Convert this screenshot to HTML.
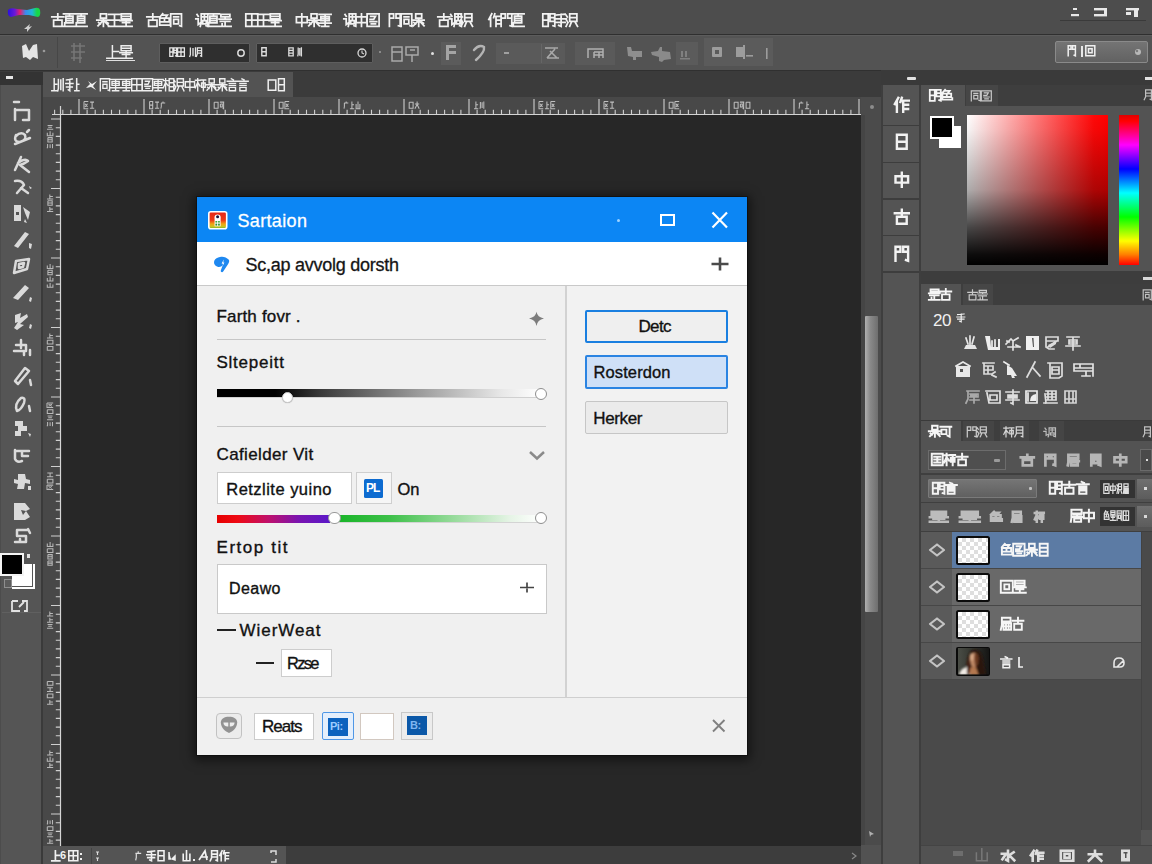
<!DOCTYPE html>
<html><head><meta charset="utf-8"><title>Editor</title>
<style>
html,body{margin:0;padding:0;}
body{width:1152px;height:864px;overflow:hidden;background:#505050;font-family:"Liberation Sans",sans-serif;position:relative;}
div,svg{box-sizing:border-box;}
svg{overflow:visible;}
</style></head><body>
<div style="position:absolute;left:0px;top:0px;width:1152px;height:864px;background:#505050;"></div>
<div style="position:absolute;left:0px;top:0px;width:1152px;height:34px;background:#4d4d4d;"></div>
<div style="position:absolute;left:0px;top:34px;width:1152px;height:1px;background:#2f2f2f;"></div>
<div style="position:absolute;left:0px;top:35px;width:1152px;height:35px;background:#535353;"></div>
<div style="position:absolute;left:0px;top:35px;width:1152px;height:1px;background:#5c5c5c;"></div>
<div style="position:absolute;left:0px;top:70px;width:1152px;height:27px;background:#3b3b3b;"></div>
<div style="position:absolute;left:0px;top:70px;width:1152px;height:1px;background:#303030;"></div>
<svg style="position:absolute;left:5px;top:5px;" width="40" height="30" viewBox="0 0 40 30"><defs><linearGradient id="lg" x1="0" x2="1"><stop offset="0" stop-color="#2a10e0"/><stop offset=".22" stop-color="#6a18d8"/><stop offset=".38" stop-color="#e8206a"/><stop offset=".55" stop-color="#3a8cf0"/><stop offset=".75" stop-color="#20b8d8"/><stop offset=".9" stop-color="#18d848"/><stop offset="1" stop-color="#18d848"/></linearGradient></defs><path d="M3 5 Q2 11 6 12 L14 10 L24 10 L33 12 Q36 11 35 5 Q34 2 30 3 L22 5 L12 4 Q5 2 3 5Z" fill="url(#lg)"/><path d="M19 24 L25 19 L24 22 L27 21 L22 27 L22 24Z" fill="#cfcfcf"/></svg>
<svg style="position:absolute;left:51.2px;top:12.8px" width="37.3" height="14.6" viewBox="0 0 37.3 14.6"><path d="M0.8 4.0L12.8 4.0M6.8 0.8L6.8 7.1M2.6 7.1L11.0 7.1L11.0 13.4L2.6 13.4L2.6 7.1M12.5 0.8L24.4 0.8M14.9 3.1L22.0 3.1L22.0 9.9L14.9 9.9L14.9 3.1M14.9 5.3L22.0 5.3M14.9 7.6L22.0 7.6M18.5 0.8L18.5 3.1M12.5 13.4L24.4 13.4M13.7 9.9L13.7 13.4M24.1 0.8L36.1 0.8M26.5 3.1L33.7 3.1L33.7 9.9L26.5 9.9L26.5 3.1M26.5 5.3L33.7 5.3M26.5 7.6L33.7 7.6M30.1 0.8L30.1 3.1M24.1 13.4L36.1 13.4M25.3 9.9L25.3 13.4" fill="none" stroke="#f2f2f2" stroke-width="1.75" stroke-linecap="square" stroke-linejoin="miter" opacity="1"/></svg>
<svg style="position:absolute;left:96.2px;top:12.8px" width="37.3" height="14.6" viewBox="0 0 37.3 14.6"><path d="M4.4 0.8L10.4 0.8L10.4 5.2L4.4 5.2L4.4 0.8M0.8 7.1L12.8 7.1M7.4 5.2L7.4 13.4M7.4 7.1L2.0 12.8M7.4 7.1L12.8 12.8M2.6 9.6L4.4 10.9M10.4 9.0L12.2 10.2M12.5 1.4L24.4 1.4M13.7 7.1L23.2 7.1M12.5 13.4L24.4 13.4M18.5 1.4L18.5 13.4M25.3 0.8L34.9 0.8L34.9 5.8L25.3 5.8L25.3 0.8M25.3 3.3L34.9 3.3M24.1 7.7L36.1 7.7M26.5 9.6L33.7 9.6M30.1 5.8L30.1 13.4M24.1 13.4L36.1 13.4" fill="none" stroke="#f2f2f2" stroke-width="1.75" stroke-linecap="square" stroke-linejoin="miter" opacity="1"/></svg>
<svg style="position:absolute;left:146.2px;top:12.8px" width="37.3" height="14.6" viewBox="0 0 37.3 14.6"><path d="M0.8 4.0L12.8 4.0M6.8 0.8L6.8 7.1M2.6 7.1L11.0 7.1L11.0 13.4L2.6 13.4L2.6 7.1M16.7 0.8L13.7 4.3M16.1 2.1L21.4 2.1L19.7 4.6M13.7 5.2L23.2 5.2L23.2 9.0L13.7 9.0L13.7 5.2M18.5 5.2L18.5 9.0M13.7 9.0L13.7 12.1L24.4 12.1L24.4 10.2M24.7 0.8L35.5 0.8L35.5 13.4L33.7 12.8M24.7 0.8L24.7 13.4M27.7 4.0L32.5 4.0M27.7 6.5L32.5 6.5L32.5 10.9L27.7 10.9L27.7 6.5" fill="none" stroke="#f2f2f2" stroke-width="1.75" stroke-linecap="square" stroke-linejoin="miter" opacity="1"/></svg>
<svg style="position:absolute;left:195.2px;top:12.8px" width="37.3" height="14.6" viewBox="0 0 37.3 14.6"><path d="M2.0 1.4L3.2 3.3M0.8 5.8L3.2 5.8L3.2 11.5L5.0 10.2M6.2 0.8L12.8 0.8L12.8 13.4L11.0 12.8M6.2 0.8L6.2 9.6L5.3 13.4M7.7 4.0L11.3 4.0M9.4 2.3L9.4 5.8M7.7 7.7L11.3 7.7L11.3 10.9L7.7 10.9L7.7 7.7M12.5 0.8L24.4 0.8M14.9 3.1L22.0 3.1L22.0 9.9L14.9 9.9L14.9 3.1M14.9 5.3L22.0 5.3M14.9 7.6L22.0 7.6M18.5 0.8L18.5 3.1M12.5 13.4L24.4 13.4M13.7 9.9L13.7 13.4M25.9 1.4L34.9 1.4L34.9 4.0L25.9 4.0M25.9 1.4L25.9 4.0M24.1 6.1L36.1 6.1M30.1 4.0L30.1 6.1M25.3 8.4L34.9 8.4M30.1 8.4L30.1 13.4M27.1 10.9L27.1 13.4M24.1 13.4L36.1 13.4" fill="none" stroke="#f2f2f2" stroke-width="1.75" stroke-linecap="square" stroke-linejoin="miter" opacity="1"/></svg>
<svg style="position:absolute;left:245.2px;top:12.8px" width="37.3" height="14.6" viewBox="0 0 37.3 14.6"><path d="M0.8 0.8L12.8 0.8L12.8 13.4L0.8 13.4L0.8 0.8M0.8 7.1L12.8 7.1M6.8 0.8L6.8 13.4M12.5 1.4L24.4 1.4M13.7 7.1L23.2 7.1M12.5 13.4L24.4 13.4M18.5 1.4L18.5 13.4M25.3 0.8L34.9 0.8L34.9 5.8L25.3 5.8L25.3 0.8M25.3 3.3L34.9 3.3M24.1 7.7L36.1 7.7M26.5 9.6L33.7 9.6M30.1 5.8L30.1 13.4M24.1 13.4L36.1 13.4" fill="none" stroke="#f2f2f2" stroke-width="1.75" stroke-linecap="square" stroke-linejoin="miter" opacity="1"/></svg>
<svg style="position:absolute;left:295.2px;top:12.8px" width="37.3" height="14.6" viewBox="0 0 37.3 14.6"><path d="M1.4 4.0L12.2 4.0L12.2 9.6L1.4 9.6L1.4 4.0M6.8 0.8L6.8 13.4M16.1 0.8L22.0 0.8L22.0 5.2L16.1 5.2L16.1 0.8M12.5 7.1L24.4 7.1M19.1 5.2L19.1 13.4M19.1 7.1L13.7 12.8M19.1 7.1L24.4 12.8M14.3 9.6L16.1 10.9M22.0 9.0L23.8 10.2M24.1 1.4L36.1 1.4M25.9 3.6L34.3 3.6L34.3 7.7L25.9 7.7L25.9 3.6M30.1 1.4L30.1 13.4M25.9 5.6L34.3 5.6M24.1 10.2L36.1 10.2M26.5 13.4L33.7 13.4" fill="none" stroke="#f2f2f2" stroke-width="1.75" stroke-linecap="square" stroke-linejoin="miter" opacity="1"/></svg>
<svg style="position:absolute;left:343.2px;top:12.8px" width="37.3" height="14.6" viewBox="0 0 37.3 14.6"><path d="M2.0 1.4L3.2 3.3M0.8 5.8L3.2 5.8L3.2 11.5L5.0 10.2M6.2 0.8L12.8 0.8L12.8 13.4L11.0 12.8M6.2 0.8L6.2 9.6L5.3 13.4M7.7 4.0L11.3 4.0M9.4 2.3L9.4 5.8M7.7 7.7L11.3 7.7L11.3 10.9L7.7 10.9L7.7 7.7M13.1 4.0L23.8 4.0L23.8 9.6L13.1 9.6L13.1 4.0M18.5 0.8L18.5 13.4M24.1 0.8L36.1 0.8L36.1 13.4L24.1 13.4L24.1 0.8M27.7 3.3L32.5 3.3L30.7 6.5L27.1 6.5M27.1 8.6L33.7 8.6M28.3 10.9L32.5 10.9" fill="none" stroke="#f2f2f2" stroke-width="1.75" stroke-linecap="square" stroke-linejoin="miter" opacity="1"/></svg>
<svg style="position:absolute;left:388.2px;top:12.8px" width="37.3" height="14.6" viewBox="0 0 37.3 14.6"><path d="M1.4 0.8L1.4 13.4M1.4 0.8L5.6 0.8L5.6 5.2L1.4 5.2M8.0 0.8L12.2 0.8L12.2 13.4L10.4 12.8M8.0 0.8L8.0 5.2L12.2 5.2M13.1 0.8L23.8 0.8L23.8 13.4L22.0 12.8M13.1 0.8L13.1 13.4M16.1 4.0L20.8 4.0M16.1 6.5L20.8 6.5L20.8 10.9L16.1 10.9L16.1 6.5M27.7 0.8L33.7 0.8L33.7 5.2L27.7 5.2L27.7 0.8M24.1 7.1L36.1 7.1M30.7 5.2L30.7 13.4M30.7 7.1L25.3 12.8M30.7 7.1L36.1 12.8M25.9 9.6L27.7 10.9M33.7 9.0L35.5 10.2" fill="none" stroke="#f2f2f2" stroke-width="1.75" stroke-linecap="square" stroke-linejoin="miter" opacity="1"/></svg>
<svg style="position:absolute;left:437.2px;top:12.8px" width="37.3" height="14.6" viewBox="0 0 37.3 14.6"><path d="M0.8 4.0L12.8 4.0M6.8 0.8L6.8 7.1M2.6 7.1L11.0 7.1L11.0 13.4L2.6 13.4L2.6 7.1M13.7 1.4L14.9 3.3M12.5 5.8L14.9 5.8L14.9 11.5L16.7 10.2M17.9 0.8L24.4 0.8L24.4 13.4L22.6 12.8M17.9 0.8L17.9 9.6L17.0 13.4M19.4 4.0L23.0 4.0M21.1 2.3L21.1 5.8M19.4 7.7L23.0 7.7L23.0 10.9L19.4 10.9L19.4 7.7M24.1 2.1L25.3 4.0M24.1 6.5L25.3 8.4M24.1 13.4L25.9 9.6M27.7 0.8L34.9 0.8L34.9 8.4L27.7 8.4L27.7 0.8M27.7 4.6L34.9 4.6M29.5 9.0L27.7 13.4M33.1 9.0L35.5 13.4" fill="none" stroke="#f2f2f2" stroke-width="1.75" stroke-linecap="square" stroke-linejoin="miter" opacity="1"/></svg>
<svg style="position:absolute;left:488.2px;top:12.8px" width="37.3" height="14.6" viewBox="0 0 37.3 14.6"><path d="M3.8 0.8L0.8 6.5M2.6 4.6L2.6 13.4M6.8 0.8L5.6 4.6M6.2 3.3L12.8 3.3M8.0 3.3L8.0 13.4M8.0 7.1L12.2 7.1M8.0 10.9L12.2 10.9M13.1 0.8L13.1 13.4M13.1 0.8L17.3 0.8L17.3 5.2L13.1 5.2M19.7 0.8L23.8 0.8L23.8 13.4L22.0 12.8M19.7 0.8L19.7 5.2L23.8 5.2M24.1 0.8L36.1 0.8M26.5 3.1L33.7 3.1L33.7 9.9L26.5 9.9L26.5 3.1M26.5 5.3L33.7 5.3M26.5 7.6L33.7 7.6M30.1 0.8L30.1 3.1M24.1 13.4L36.1 13.4M25.3 9.9L25.3 13.4" fill="none" stroke="#f2f2f2" stroke-width="1.75" stroke-linecap="square" stroke-linejoin="miter" opacity="1"/></svg>
<svg style="position:absolute;left:542.2px;top:12.8px" width="37.3" height="14.6" viewBox="0 0 37.3 14.6"><path d="M0.8 0.8L6.2 0.8L6.2 13.4L0.8 13.4L0.8 0.8M0.8 7.1L6.2 7.1M8.0 0.8L12.8 0.8L12.8 13.4L11.0 12.8M8.0 0.8L8.0 8.4M8.0 4.6L12.8 4.6M8.0 8.4L12.8 8.4M13.7 2.1L23.2 1.1M12.5 5.8L24.4 5.8M13.7 9.4L23.2 9.4M19.1 1.4L19.1 13.4L16.7 12.4M24.1 2.1L25.3 4.0M24.1 6.5L25.3 8.4M24.1 13.4L25.9 9.6M27.7 0.8L34.9 0.8L34.9 8.4L27.7 8.4L27.7 0.8M27.7 4.6L34.9 4.6M29.5 9.0L27.7 13.4M33.1 9.0L35.5 13.4" fill="none" stroke="#f2f2f2" stroke-width="1.75" stroke-linecap="square" stroke-linejoin="miter" opacity="1"/></svg>
<div style="position:absolute;left:1060px;top:20px;width:86px;height:1px;background:#3a3a3a;"></div>
<svg style="position:absolute;left:1068px;top:6px;" width="76" height="13" viewBox="0 0 76 13"><g fill="#e8e8e8"><rect x="3" y="8" width="8" height="2.2"/><rect x="5" y="2" width="4" height="2"/><rect x="26" y="2" width="13" height="2.4"/><rect x="26" y="8" width="13" height="2.4"/><rect x="36" y="2" width="3" height="8"/><rect x="58" y="2" width="13" height="2.4"/><rect x="66" y="2" width="4" height="9"/><rect x="58" y="6" width="5" height="3"/></g></svg>
<svg style="position:absolute;left:20px;top:42px;" width="34" height="22" viewBox="0 0 34 22"><path d="M2 4 L6 2 L9 9 L13 3 L17 2 L18 17 L13 15 L10 18 L6 15 L3 16Z" fill="#e4e4e4"/><circle cx="24" cy="9" r="1.3" fill="#9a9a9a"/></svg>
<div style="position:absolute;left:57px;top:37px;width:1px;height:31px;background:#474747;"></div>
<svg style="position:absolute;left:68px;top:42px;" width="20" height="22" viewBox="0 0 20 22"><g stroke="#767676" stroke-width="1.6" fill="none"><path d="M3 4H17M3 10H17M3 16H14M6 1V19M12 1V21"/></g></svg>
<svg style="position:absolute;left:106.2px;top:45.2px" width="27.5" height="14.5" viewBox="0 0 27.5 14.5"><path d="M6.4 0.8L6.4 13.3M6.4 6.4L12.7 6.4M0.8 13.3L13.3 13.3M15.1 0.8L25.1 0.8L25.1 5.8L15.1 5.8L15.1 0.8M15.1 3.3L25.1 3.3M13.8 7.7L26.3 7.7M16.3 9.6L23.8 9.6M20.1 5.8L20.1 13.3M13.8 13.3L26.3 13.3" fill="none" stroke="#ededed" stroke-width="1.50" stroke-linecap="square" stroke-linejoin="miter" opacity="1"/></svg>
<div style="position:absolute;left:106px;top:60px;width:29px;height:1.3px;background:#e0e0e0;"></div>
<div style="position:absolute;left:159px;top:43px;width:91px;height:20px;background:#2f2f2f;border:1px solid #5e5e5e;border-radius:1px"></div>
<div style="position:absolute;left:256px;top:43px;width:117px;height:20px;background:#2f2f2f;border:1px solid #5e5e5e;border-radius:1px"></div>
<svg style="position:absolute;left:169.2px;top:47.2px" width="16.6" height="10.5" viewBox="0 0 16.6 10.5"><path d="M0.8 0.8L3.9 0.8L3.9 9.3L0.8 9.3L0.8 0.8M0.8 5.0L3.9 5.0M4.9 0.8L7.6 0.8L7.6 9.3L6.6 8.9M4.9 0.8L4.9 5.9M4.9 3.3L7.6 3.3M4.9 5.9L7.6 5.9M8.6 0.8L15.4 0.8L15.4 9.3L8.6 9.3L8.6 0.8M8.6 5.0L15.4 5.0M12.0 0.8L12.0 9.3" fill="none" stroke="#e6e6e6" stroke-width="1.30" stroke-linecap="square" stroke-linejoin="miter" opacity="1"/></svg>
<svg style="position:absolute;left:189.2px;top:47.2px" width="14.8" height="10.5" viewBox="0 0 14.8 10.5"><path d="M1.4 1.2L1.4 7.6L0.8 9.3M4.0 1.7L4.0 8.5M6.5 0.8L6.5 9.3M8.4 0.8L12.6 0.8L12.6 9.3L11.6 8.9M8.4 0.8L8.4 6.7L7.5 9.3M8.4 3.6L12.6 3.6M8.4 6.1L12.6 6.1" fill="none" stroke="#e6e6e6" stroke-width="1.30" stroke-linecap="square" stroke-linejoin="miter" opacity="1"/></svg>
<svg style="position:absolute;left:235px;top:47px;" width="12" height="12" viewBox="0 0 12 12"><circle cx="6" cy="6" r="3.2" fill="none" stroke="#d8d8d8" stroke-width="1.5"/></svg>
<svg style="position:absolute;left:260.2px;top:47.2px" width="8.4" height="10.0" viewBox="0 0 8.4 10.0"><path d="M1.8 0.8L6.2 0.8L6.2 8.8L1.8 8.8L1.8 0.8M1.8 4.8L6.2 4.8" fill="none" stroke="#dcdcdc" stroke-width="1.40" stroke-linecap="square" stroke-linejoin="miter" opacity="1"/></svg>
<svg style="position:absolute;left:287.2px;top:47.2px" width="8.4" height="10.0" viewBox="0 0 8.4 10.0"><path d="M1.8 0.8L6.2 0.8L6.2 8.8L1.8 8.8L1.8 0.8M1.8 3.4L6.2 3.4M1.8 6.1L6.2 6.1" fill="none" stroke="#dcdcdc" stroke-width="1.30" stroke-linecap="square" stroke-linejoin="miter" opacity="1"/></svg>
<svg style="position:absolute;left:297.2px;top:47.2px" width="6.0" height="10.0" viewBox="0 0 6.0 10.0"><path d="M1.2 1.2L1.2 7.2L0.8 8.8M2.8 1.6L2.8 8.0M4.4 0.8L4.4 8.8" fill="none" stroke="#dcdcdc" stroke-width="1.30" stroke-linecap="square" stroke-linejoin="miter" opacity="1"/></svg>
<svg style="position:absolute;left:355px;top:46px;" width="14" height="14" viewBox="0 0 14 14"><circle cx="7" cy="7" r="4" fill="none" stroke="#d8d8d8" stroke-width="1.3"/><path d="M7 4.5V7L9 8" stroke="#d8d8d8" stroke-width="1.1" fill="none"/></svg>
<div style="position:absolute;left:379px;top:51px;width:2px;height:2px;background:#8a8a8a;"></div>
<svg style="position:absolute;left:390px;top:44px;" width="32" height="20" viewBox="0 0 32 20"><g stroke="#a9a9a9" stroke-width="1.5" fill="none"><path d="M2 3H12V17H2ZM2 8H12"/><path d="M16 3H28V11H16ZM20 6H25M22 11V18"/></g></svg>
<div style="position:absolute;left:431px;top:52px;width:2.5px;height:2.5px;background:#e0e0e0;border-radius:2px"></div>
<div style="position:absolute;left:441px;top:42px;width:20px;height:23px;background:#5b5b5b;"></div>
<svg style="position:absolute;left:444px;top:44px;" width="14" height="18" viewBox="0 0 14 18"><g fill="#a4a4a4"><rect x="2" y="1" width="3" height="15"/><rect x="2" y="1" width="10" height="3"/><rect x="5" y="7" width="7" height="3"/></g></svg>
<svg style="position:absolute;left:470px;top:43px;" width="18" height="20" viewBox="0 0 18 20"><path d="M4 7 Q9 1 14 4 Q15 9 6 17" fill="none" stroke="#b4b4b4" stroke-width="2.4" stroke-linecap="round"/></svg>
<div style="position:absolute;left:496px;top:43px;width:69px;height:21px;background:#5a5a5a;"></div>
<div style="position:absolute;left:504px;top:52px;width:5px;height:1.6px;background:#a0a0a0;"></div>
<div style="position:absolute;left:541px;top:44px;width:1px;height:19px;background:#666;"></div>
<svg style="position:absolute;left:543px;top:45px;" width="18" height="16" viewBox="0 0 18 16"><g stroke="#a8a8a8" stroke-width="1.6" fill="none"><path d="M2 3H15M4 13H16M12 4L4 13M7 6L14 13"/></g></svg>
<div style="position:absolute;left:575px;top:42px;width:40px;height:23px;background:#5a5a5a;"></div>
<svg style="position:absolute;left:586px;top:47px;" width="20" height="13" viewBox="0 0 20 13"><g stroke="#b0b0b0" stroke-width="1.5" fill="none"><path d="M2 11V2H17V11M8 5H17M8 5V11M8 8H17M13 5V11"/></g></svg>
<svg style="position:absolute;left:624px;top:44px;" width="22" height="20" viewBox="0 0 22 20"><path d="M3 3 L7 3 L8 7 L18 7 L18 13 L12 13 L12 16 L9 16 L9 13 L4 12Z" fill="#8e8e8e"/></svg>
<svg style="position:absolute;left:650px;top:44px;" width="26" height="20" viewBox="0 0 26 20"><path d="M1 8 L8 7 L10 3 L12 3 L12 7 L20 8 L21 15 L14 16 L12 18 L9 17 L9 13 L2 11Z" fill="#8a8a8a"/></svg>
<div style="position:absolute;left:676px;top:42px;width:22px;height:23px;background:#5b5b5b;"></div>
<svg style="position:absolute;left:678px;top:50px;" width="16" height="12" viewBox="0 0 16 12"><g fill="#808080"><rect x="3" y="1" width="2" height="6"/><rect x="7" y="1" width="2" height="6"/><rect x="2" y="8" width="10" height="1.5"/></g></svg>
<div style="position:absolute;left:704px;top:38px;width:69px;height:28px;background:#5b5b5b;"></div>
<svg style="position:absolute;left:708px;top:44px;" width="60" height="18" viewBox="0 0 60 18"><g fill="#9c9c9c"><rect x="4" y="3" width="10" height="10" rx="1"/><rect x="28" y="3" width="7" height="10"/><rect x="35" y="1" width="2" height="14"/><rect x="38" y="11" width="7" height="1.6"/><rect x="58" y="4" width="1.6" height="11"/></g><rect x="7" y="6" width="4" height="4" fill="#5b5b5b"/></svg>
<div style="position:absolute;left:1055px;top:41px;width:93px;height:22px;background:linear-gradient(#747474,#626262);border:1px solid #8a8a8a;border-radius:2px"></div>
<svg style="position:absolute;left:1067.2px;top:45.2px" width="10.0" height="12.0" viewBox="0 0 10.0 12.0"><path d="M1.2 0.8L1.2 10.8M1.2 0.8L4.0 0.8L4.0 4.3L1.2 4.3M5.6 0.8L8.4 0.8L8.4 10.8L7.2 10.3M5.6 0.8L5.6 4.3L8.4 4.3" fill="none" stroke="#f0f0f0" stroke-width="1.50" stroke-linecap="square" stroke-linejoin="miter" opacity="1"/></svg>
<div style="position:absolute;left:1081px;top:46px;width:1.5px;height:11px;background:#e8e8e8;"></div>
<svg style="position:absolute;left:1085.2px;top:45.2px" width="11.0" height="12.0" viewBox="0 0 11.0 12.0"><path d="M0.8 0.8L9.8 0.8L9.8 10.8L0.8 10.8L0.8 0.8M3.5 3.8L7.1 3.8L7.1 7.8L3.5 7.8L3.5 3.8" fill="none" stroke="#f0f0f0" stroke-width="1.50" stroke-linecap="square" stroke-linejoin="miter" opacity="1"/></svg>
<svg style="position:absolute;left:1133px;top:47px;" width="10" height="10" viewBox="0 0 10 10"><circle cx="5" cy="5" r="3" fill="#b8b8b8"/><circle cx="4" cy="4" r="1.2" fill="#7a7a7a"/></svg>
<div style="position:absolute;left:43px;top:72px;width:250px;height:25px;background:#535353;"></div>
<div style="position:absolute;left:0px;top:72px;width:43px;height:13px;background:#333;"></div>
<div style="position:absolute;left:6px;top:76px;width:7px;height:3px;background:#e6e6e6;"></div>
<svg style="position:absolute;left:51.2px;top:78.2px" width="7.4" height="14.0" viewBox="0 0 7.4 14.0"><path d="M3.2 0.8L3.2 12.8M3.2 6.2L5.9 6.2M0.8 12.8L6.2 12.8" fill="none" stroke="#efefef" stroke-width="1.50" stroke-linecap="square" stroke-linejoin="miter" opacity="1"/></svg>
<svg style="position:absolute;left:57.2px;top:78.2px" width="8.0" height="14.0" viewBox="0 0 8.0 14.0"><path d="M1.4 1.4L1.4 10.4L0.8 12.8M3.8 2.0L3.8 11.6M6.2 0.8L6.2 12.8" fill="none" stroke="#efefef" stroke-width="1.50" stroke-linecap="square" stroke-linejoin="miter" opacity="1"/></svg>
<svg style="position:absolute;left:65.2px;top:78.2px" width="9.2" height="14.0" viewBox="0 0 9.2 14.0"><path d="M1.5 2.0L7.3 1.0M0.8 5.6L8.0 5.6M1.5 9.0L7.3 9.0M4.8 1.4L4.8 12.8L3.3 11.8" fill="none" stroke="#efefef" stroke-width="1.50" stroke-linecap="square" stroke-linejoin="miter" opacity="1"/></svg>
<svg style="position:absolute;left:74.2px;top:78.2px" width="6.2" height="14.0" viewBox="0 0 6.2 14.0"><path d="M2.7 0.8L2.7 12.8M2.7 6.2L4.8 6.2M0.8 12.8L5.0 12.8" fill="none" stroke="#efefef" stroke-width="1.50" stroke-linecap="square" stroke-linejoin="miter" opacity="1"/></svg>
<svg style="position:absolute;left:84px;top:78px;" width="14" height="14" viewBox="0 0 14 14"><path d="M2 10 L6 6 L4 3 L8 6 L13 3 L9 8 L12 12 L7 9Z" fill="#efefef"/></svg>
<svg style="position:absolute;left:99.2px;top:78.2px" width="150.4" height="14.0" viewBox="0 0 150.4 14.0"><path d="M1.3 0.8L10.6 0.8L10.6 12.8L9.1 12.2M1.3 0.8L1.3 12.8M3.9 3.8L8.0 3.8M3.9 6.2L8.0 6.2L8.0 10.4L3.9 10.4L3.9 6.2M11.4 1.4L21.7 1.4M13.0 3.4L20.2 3.4L20.2 7.4L13.0 7.4L13.0 3.4M16.6 1.4L16.6 12.8M13.0 5.4L20.2 5.4M11.4 9.8L21.7 9.8M13.5 12.8L19.7 12.8M22.0 1.4L32.4 1.4M23.6 3.4L30.8 3.4L30.8 7.4L23.6 7.4L23.6 3.4M27.2 1.4L27.2 12.8M23.6 5.4L30.8 5.4M22.0 9.8L32.4 9.8M24.1 12.8L30.3 12.8M32.7 0.8L43.0 0.8L43.0 12.8L32.7 12.8L32.7 0.8M32.7 6.8L43.0 6.8M37.8 0.8L37.8 12.8M43.3 0.8L53.6 0.8L53.6 12.8L43.3 12.8L43.3 0.8M46.4 3.2L50.5 3.2L49.0 6.2L45.9 6.2M45.9 8.2L51.5 8.2M46.9 10.4L50.5 10.4M53.9 1.4L64.2 1.4M55.4 3.4L62.7 3.4L62.7 7.4L55.4 7.4L55.4 3.4M59.1 1.4L59.1 12.8M55.4 5.4L62.7 5.4M53.9 9.8L64.2 9.8M56.0 12.8L62.2 12.8M64.5 2.6L68.9 2.6M66.6 0.8L66.6 12.8M66.6 4.4L64.5 9.2M66.6 4.4L68.9 7.4M70.2 0.8L74.8 0.8L74.8 12.8L70.2 12.8L70.2 0.8M70.2 4.8L74.8 4.8M70.2 8.7L74.8 8.7M75.1 2.0L76.2 3.8M75.1 6.2L76.2 8.0M75.1 12.8L76.7 9.2M78.2 0.8L84.4 0.8L84.4 8.0L78.2 8.0L78.2 0.8M78.2 4.4L84.4 4.4M79.8 8.6L78.2 12.8M82.9 8.6L84.9 12.8M86.3 3.8L95.6 3.8L95.6 9.2L86.3 9.2L86.3 3.8M90.9 0.8L90.9 12.8M96.4 2.2L101.0 2.2M98.7 0.8L98.7 12.8M98.7 4.4L96.4 9.8M98.7 4.4L101.0 8.0M102.1 2.0L106.7 2.0M102.6 5.0L106.2 5.0L106.2 9.2L102.6 9.2L102.6 5.0M104.4 2.0L104.4 12.8M110.1 0.8L115.3 0.8L115.3 5.0L110.1 5.0L110.1 0.8M107.0 6.8L117.3 6.8M112.7 5.0L112.7 12.8M112.7 6.8L108.0 12.2M112.7 6.8L117.3 12.2M108.5 9.2L110.1 10.4M115.3 8.6L116.8 9.8M120.7 0.8L125.9 0.8L125.9 5.0L120.7 5.0L120.7 0.8M117.6 6.8L127.9 6.8M123.3 5.0L123.3 12.8M123.3 6.8L118.7 12.2M123.3 6.8L127.9 12.2M119.2 9.2L120.7 10.4M125.9 8.6L127.4 9.8M132.4 0.8L134.4 1.8M128.2 3.2L138.6 3.2M130.3 5.4L136.5 5.4M130.3 7.4L136.5 7.4M130.3 9.4L136.5 9.4L136.5 12.8L130.3 12.8L130.3 9.4M143.0 0.8L145.1 1.8M138.9 3.2L149.2 3.2M140.9 5.4L147.1 5.4M140.9 7.4L147.1 7.4M140.9 9.4L147.1 9.4L147.1 12.8L140.9 12.8L140.9 9.4" fill="none" stroke="#efefef" stroke-width="1.40" stroke-linecap="square" stroke-linejoin="miter" opacity="1"/></svg>
<svg style="position:absolute;left:267.2px;top:78.2px" width="19.8" height="14.0" viewBox="0 0 19.8 14.0"><path d="M1.2 2.0L8.8 2.0L8.8 12.2L1.2 12.2L1.2 2.0M11.5 0.8L17.3 0.8L17.3 12.8L11.5 12.8L11.5 0.8M11.5 6.8L17.3 6.8" fill="none" stroke="#efefef" stroke-width="1.50" stroke-linecap="square" stroke-linejoin="miter" opacity="1"/></svg>
<div style="position:absolute;left:0px;top:85px;width:41px;height:779px;background:#555555;"></div>
<div style="position:absolute;left:0px;top:85px;width:1px;height:779px;background:#4c4c4c;"></div>
<div style="position:absolute;left:41px;top:85px;width:2px;height:779px;background:#3a3a3a;"></div>
<div style="position:absolute;left:2px;top:612px;width:39px;height:1px;background:#606060;"></div>
<svg style="position:absolute;left:12px;top:100px;" width="22" height="22" viewBox="0 0 22 22"><path d="M2 2H7M3 9V20M3 10H17V20H11" fill="none" stroke="#dadada" stroke-width="2.5" stroke-linejoin="round" stroke-linecap="round"/></svg>
<svg style="position:absolute;left:12px;top:129px;" width="22" height="22" viewBox="0 0 22 22"><path d="M4 6Q1 13 8 13Q15 11 13 6Q9 2 4 7M3 15L18 9M15 3L17 1" fill="none" stroke="#dadada" stroke-width="2.5" stroke-linejoin="round" stroke-linecap="round"/></svg>
<svg style="position:absolute;left:12px;top:155px;" width="22" height="22" viewBox="0 0 22 22"><path d="M3 15L9 2M6 8Q13 3 16 6Q12 9 8 10L17 17" fill="none" stroke="#dadada" stroke-width="2.5" stroke-linejoin="round" stroke-linecap="round"/></svg>
<svg style="position:absolute;left:12px;top:178px;" width="22" height="22" viewBox="0 0 22 22"><path d="M17 8L20 10L18 11Z" fill="#dadada" fill-rule="evenodd"/><path d="M3 3Q10 2 12 7L5 15M9 10L16 15" fill="none" stroke="#dadada" stroke-width="2.5" stroke-linejoin="round" stroke-linecap="round"/></svg>
<svg style="position:absolute;left:12px;top:204px;" width="22" height="22" viewBox="0 0 22 22"><path d="M2 1H9V17H2ZM4 8H7V11H4ZM11 3L18 8L16 16L13 9ZM13 15L15 19L12 18Z" fill="#dadada" fill-rule="evenodd"/></svg>
<svg style="position:absolute;left:12px;top:231px;" width="22" height="22" viewBox="0 0 22 22"><path d="M13 1L17 3L6 17L2 15ZM17 12L20 13L19 18L17 17Z" fill="#dadada" fill-rule="evenodd"/></svg>
<svg style="position:absolute;left:12px;top:258px;" width="22" height="22" viewBox="0 0 22 22"><path d="M4 3L17 1L15 11L2 15ZM7 6L12 5L11 9L7 10Z" fill="none" stroke="#dadada" stroke-width="2.5" stroke-linejoin="round" stroke-linecap="round"/></svg>
<svg style="position:absolute;left:12px;top:284px;" width="22" height="22" viewBox="0 0 22 22"><path d="M13 1L17 4L6 16L1 14ZM18 13L20 14L19 18L17 17Z" fill="#dadada" fill-rule="evenodd"/></svg>
<svg style="position:absolute;left:12px;top:312px;" width="22" height="22" viewBox="0 0 22 22"><path d="M3 3L9 1L8 6L15 2L16 5L8 12L12 13L5 18L2 16L6 10L3 11ZM18 12L20 13L19 17L17 16Z" fill="#dadada" fill-rule="evenodd"/></svg>
<svg style="position:absolute;left:12px;top:338px;" width="22" height="22" viewBox="0 0 22 22"><path d="M9 2V10M4 7H14V13M2 13H12V17M18 12V17" fill="none" stroke="#dadada" stroke-width="2.5" stroke-linejoin="round" stroke-linecap="round"/></svg>
<svg style="position:absolute;left:12px;top:366px;" width="22" height="22" viewBox="0 0 22 22"><path d="M13 2L17 5L6 18L3 15ZM18 14L19 19" fill="none" stroke="#dadada" stroke-width="2.5" stroke-linejoin="round" stroke-linecap="round"/></svg>
<svg style="position:absolute;left:12px;top:395px;" width="22" height="22" viewBox="0 0 22 22"><path d="M5 16Q2 9 9 3Q14 2 12 8Q9 15 5 16M17 11L18 16" fill="none" stroke="#dadada" stroke-width="2.5" stroke-linejoin="round" stroke-linecap="round"/></svg>
<svg style="position:absolute;left:12px;top:420px;" width="22" height="22" viewBox="0 0 22 22"><path d="M3 1H11V6H15V11H9V16H3V11H6V6H3ZM16 13L19 14L18 17Z" fill="#dadada" fill-rule="evenodd"/></svg>
<svg style="position:absolute;left:12px;top:447px;" width="22" height="22" viewBox="0 0 22 22"><path d="M3 3V12Q5 16 10 14M3 4H17M10 4V9H16" fill="none" stroke="#dadada" stroke-width="2.5" stroke-linejoin="round" stroke-linecap="round"/></svg>
<svg style="position:absolute;left:12px;top:473px;" width="22" height="22" viewBox="0 0 22 22"><path d="M6 1H13L14 6L18 7V11L13 10L12 16H5L6 11L2 10V6L6 7ZM16 13H19V17H16Z" fill="#dadada" fill-rule="evenodd"/></svg>
<svg style="position:absolute;left:12px;top:502px;" width="22" height="22" viewBox="0 0 22 22"><path d="M2 1H13L18 7L14 9L18 15L13 18H2ZM9 8L14 9L11 13Z" fill="#dadada" fill-rule="evenodd"/></svg>
<svg style="position:absolute;left:12px;top:528px;" width="22" height="22" viewBox="0 0 22 22"><path d="M5 2H15M5 2V8H14V14H3M16 1L18 5M8 14V11" fill="none" stroke="#dadada" stroke-width="2.5" stroke-linejoin="round" stroke-linecap="round"/></svg>
<div style="position:absolute;left:12px;top:564px;width:23px;height:25px;background:#ffffff;box-shadow:inset -2px -2px 0 0 #fff,inset -3px -3px 0 0 #555"></div>
<div style="position:absolute;left:0px;top:553px;width:24px;height:23px;background:#000;border:2.5px solid #f4f4f4"></div>
<div style="position:absolute;left:26.5px;top:554px;width:3.5px;height:3.5px;background:#e0e0e0;"></div>
<div style="position:absolute;left:4px;top:579px;width:8px;height:9px;background:#5c5c5c;border:1px solid #8e8e8e"></div>
<svg style="position:absolute;left:10px;top:599px;" width="20" height="14" viewBox="0 0 20 14"><g stroke="#e2e2e2" stroke-width="1.8" fill="none"><path d="M2 2H8M2 2V12H10M12 2H17V12H14M9 8L14 3"/></g></svg>
<div style="position:absolute;left:43px;top:97px;width:838px;height:18px;background:#484848;"></div>
<div style="position:absolute;left:43px;top:97px;width:18px;height:749px;background:#484848;"></div>
<div style="position:absolute;left:61px;top:115px;width:800px;height:731px;background:#272727;"></div>
<svg style="position:absolute;left:0;top:0" width="1152" height="864" viewBox="0 0 1152 864"><path d="M54.6 109.8V115M62.8 109.8V115M70.9 109.8V115M79.0 99V115M87.1 109.8V115M95.2 109.8V115M103.4 109.8V115M111.5 109.8V115M119.6 109.8V115M127.8 109.8V115M135.9 109.8V115M144.0 99V115M152.1 109.8V115M160.2 109.8V115M168.4 109.8V115M176.5 109.8V115M184.6 109.8V115M192.8 109.8V115M200.9 109.8V115M209.0 99V115M217.1 109.8V115M225.2 109.8V115M233.4 109.8V115M241.5 109.8V115M249.6 109.8V115M257.8 109.8V115M265.9 109.8V115M274.0 99V115M282.1 109.8V115M290.2 109.8V115M298.4 109.8V115M306.5 109.8V115M314.6 109.8V115M322.8 109.8V115M330.9 109.8V115M339.0 99V115M347.1 109.8V115M355.2 109.8V115M363.4 109.8V115M371.5 109.8V115M379.6 109.8V115M387.8 109.8V115M395.9 109.8V115M404.0 99V115M412.1 109.8V115M420.2 109.8V115M428.4 109.8V115M436.5 109.8V115M444.6 109.8V115M452.8 109.8V115M460.9 109.8V115M469.0 99V115M477.1 109.8V115M485.2 109.8V115M493.4 109.8V115M501.5 109.8V115M509.6 109.8V115M517.8 109.8V115M525.9 109.8V115M534.0 99V115M542.1 109.8V115M550.2 109.8V115M558.4 109.8V115M566.5 109.8V115M574.6 109.8V115M582.8 109.8V115M590.9 109.8V115M599.0 99V115M607.1 109.8V115M615.2 109.8V115M623.4 109.8V115M631.5 109.8V115M639.6 109.8V115M647.8 109.8V115M655.9 109.8V115M664.0 99V115M672.1 109.8V115M680.2 109.8V115M688.4 109.8V115M696.5 109.8V115M704.6 109.8V115M712.8 109.8V115M720.9 109.8V115M729.0 99V115M737.1 109.8V115M745.2 109.8V115M753.4 109.8V115M761.5 109.8V115M769.6 109.8V115M777.8 109.8V115M785.9 109.8V115M794.0 99V115M802.1 109.8V115M810.2 109.8V115M818.4 109.8V115M826.5 109.8V115M834.6 109.8V115M842.8 109.8V115M850.9 109.8V115M859.0 99V115" stroke="#cfcfcf" stroke-width="1.1" fill="none"/>
<path d="M52 114.5H861" stroke="#d4d4d4" stroke-width="1.2"/>
<path d="M51 119.0H61M55.8 127.7H61M55.8 136.4H61M55.8 145.1H61M55.8 153.8H61M55.8 162.4H61M55.8 171.1H61M55.8 179.8H61M51 188.5H61M55.8 197.2H61M55.8 205.9H61M55.8 214.6H61M55.8 223.2H61M55.8 231.9H61M55.8 240.6H61M55.8 249.3H61M51 258.0H61M55.8 266.7H61M55.8 275.4H61M55.8 284.1H61M55.8 292.8H61M55.8 301.4H61M55.8 310.1H61M55.8 318.8H61M51 327.5H61M55.8 336.2H61M55.8 344.9H61M55.8 353.6H61M55.8 362.2H61M55.8 370.9H61M55.8 379.6H61M55.8 388.3H61M51 397.0H61M55.8 405.7H61M55.8 414.4H61M55.8 423.1H61M55.8 431.8H61M55.8 440.4H61M55.8 449.1H61M55.8 457.8H61M51 466.5H61M55.8 475.2H61M55.8 483.9H61M55.8 492.6H61M55.8 501.2H61M55.8 509.9H61M55.8 518.6H61M55.8 527.3H61M51 536.0H61M55.8 544.7H61M55.8 553.4H61M55.8 562.1H61M55.8 570.8H61M55.8 579.4H61M55.8 588.1H61M55.8 596.8H61M51 605.5H61M55.8 614.2H61M55.8 622.9H61M55.8 631.6H61M55.8 640.2H61M55.8 648.9H61M55.8 657.6H61M55.8 666.3H61M51 675.0H61M55.8 683.7H61M55.8 692.4H61M55.8 701.1H61M55.8 709.8H61M55.8 718.4H61M55.8 727.1H61M55.8 735.8H61M51 744.5H61M55.8 753.2H61M55.8 761.9H61M55.8 770.6H61M55.8 779.2H61M55.8 787.9H61M55.8 796.6H61M55.8 805.3H61M51 814.0H61M55.8 822.7H61M55.8 831.4H61M55.8 840.1H61" stroke="#cfcfcf" stroke-width="1.1" fill="none"/>
<path d="M60.5 106V846" stroke="#d4d4d4" stroke-width="1.2"/>
<path d="M84.0 101.5L88.3 101.5M84.0 101.5L84.0 108.7L88.3 108.7M85.1 103.7L87.5 106.9M87.5 103.7L85.1 106.9M90.1 102.1L94.0 102.1M92.1 102.1L92.1 108.3M89.9 108.3L94.2 108.3M149.6 101.5L152.7 101.5L152.7 108.7L149.6 108.7L149.6 101.5M149.6 105.1L152.7 105.1M155.1 102.1L159.0 102.1M157.1 102.1L157.1 108.3M154.9 108.3L159.2 108.3M163.0 101.5L163.0 102.6M161.1 102.9L165.2 102.9M161.3 102.9L161.3 106.5L160.8 108.7M214.2 102.2L218.1 102.2L218.1 108.3L214.2 108.3L214.2 102.2M219.9 102.1L224.2 102.1M223.6 102.1L223.6 108.7L222.7 108.0M220.4 104.0L222.3 104.0L222.3 106.9L220.4 106.9L220.4 104.0M279.2 102.2L283.1 102.2L283.1 108.3L279.2 108.3L279.2 102.2M284.9 101.5L289.2 101.5M284.9 101.5L284.9 108.7L289.2 108.7M286.0 103.7L288.4 106.9M288.4 103.7L286.0 106.9M346.2 101.5L346.2 102.6M344.2 102.9L348.3 102.9M344.4 102.9L344.4 106.5L344.0 108.7M351.9 101.5L351.9 108.7M351.9 104.7L354.0 104.7M349.9 108.7L354.2 108.7M356.1 104.0L356.1 108.7L359.9 108.7L359.9 104.0M358.0 101.5L358.0 108.7M409.2 102.2L413.1 102.2L413.1 108.3L409.2 108.3L409.2 102.2M414.9 104.0L419.2 104.0M417.1 101.5L417.1 104.4L414.9 108.7M417.1 104.4L419.2 108.7M475.9 101.5L475.9 108.7M475.9 104.7L478.1 104.7M474.0 108.7L478.3 108.7M480.4 101.9L480.4 107.3L479.9 108.7M482.1 102.2L482.1 108.0M483.8 101.5L483.8 108.7M539.0 101.5L543.3 101.5M539.0 101.5L539.0 108.7L543.3 108.7M540.1 103.7L542.5 106.9M542.5 103.7L540.1 106.9M546.9 101.5L546.9 108.7M546.9 104.7L549.0 104.7M544.9 108.7L549.2 108.7M550.8 101.5L555.2 101.5M550.8 101.5L550.8 108.7L555.2 108.7M551.9 103.7L554.3 106.9M554.3 103.7L551.9 106.9M604.0 101.5L608.3 101.5M604.0 101.5L604.0 108.7L608.3 108.7M605.1 103.7L607.5 106.9M607.5 103.7L605.1 106.9M610.1 102.1L614.0 102.1M612.1 102.1L612.1 108.3M609.9 108.3L614.2 108.3M669.2 102.2L673.1 102.2L673.1 108.3L669.2 108.3L669.2 102.2M674.9 101.5L679.2 101.5M674.9 101.5L674.9 108.7L679.2 108.7M676.0 103.7L678.4 106.9M678.4 103.7L676.0 106.9M734.2 102.2L738.1 102.2L738.1 108.3L734.2 108.3L734.2 102.2M739.9 102.1L744.2 102.1M743.6 102.1L743.6 108.7L742.7 108.0M740.4 104.0L742.3 104.0L742.3 106.9L740.4 106.9L740.4 104.0M746.1 102.2L749.9 102.2L749.9 108.3L746.1 108.3L746.1 102.2M801.2 101.5L801.2 102.6M799.2 102.9L803.3 102.9M799.4 102.9L799.4 106.5L799.0 108.7M806.9 101.5L806.9 108.7M806.9 104.7L809.0 104.7M804.9 108.7L809.2 108.7" stroke="#bdbdbd" stroke-width="1.05" fill="none"/>
<path d="M47.6 125.4L52.5 125.4M48.2 127.2L51.9 127.2M47.0 129.2L53.2 129.2M47.3 132.8L47.3 135.7L52.9 135.7L52.9 132.8M50.1 131.3L50.1 135.7M47.9 137.6L52.2 137.6L52.2 142.0L47.9 142.0L47.9 137.6M47.9 139.8L52.2 139.8M47.6 144.1L47.6 147.4L47.0 148.3M50.1 144.3L50.1 147.9M52.5 143.9L52.5 148.3M49.8 194.5L49.8 198.9M49.8 196.5L52.9 196.5M47.0 198.9L53.2 198.9M47.9 200.8L52.2 200.8L52.2 205.2L47.9 205.2L47.9 200.8M47.9 203.0L52.2 203.0M49.8 207.1L49.8 211.5M49.8 209.1L52.9 209.1M47.0 211.5L53.2 211.5M47.3 265.5L47.3 268.4L52.9 268.4L52.9 265.5M50.1 264.0L50.1 268.4M47.9 270.3L52.2 270.3L52.2 274.7L47.9 274.7L47.9 270.3M47.9 272.5L52.2 272.5M47.3 278.1L47.3 281.0L52.9 281.0L52.9 278.1M50.1 276.6L50.1 281.0M47.3 284.4L47.3 287.3L52.9 287.3L52.9 284.4M50.1 282.9L50.1 287.3M49.8 333.5L49.8 337.9M49.8 335.5L52.9 335.5M47.0 337.9L53.2 337.9M47.3 340.2L52.9 340.2L52.9 344.0L47.3 344.0L47.3 340.2M47.3 346.5L52.9 346.5L52.9 350.3L47.3 350.3L47.3 346.5M47.0 403.0L53.2 403.0M47.0 403.0L47.0 407.4L53.2 407.4M48.5 404.3L51.9 406.3M51.9 404.3L48.5 406.3M47.3 409.7L52.9 409.7L52.9 413.5L47.3 413.5L47.3 409.7M47.6 416.0L52.5 416.0M48.2 417.8L51.9 417.8M47.0 419.8L53.2 419.8M47.6 422.1L47.6 425.4L47.0 426.3M50.1 422.3L50.1 425.9M52.5 421.9L52.5 426.3M47.3 472.9L52.9 472.9M50.1 472.9L50.1 476.7M47.0 476.7L53.2 476.7M47.3 479.2L52.9 479.2L52.9 483.0L47.3 483.0L47.3 479.2M47.0 485.1L53.2 485.1M47.0 485.1L47.0 489.5L53.2 489.5M48.5 486.4L51.9 488.4M51.9 486.4L48.5 488.4M47.3 543.5L47.3 546.4L52.9 546.4L52.9 543.5M50.1 542.0L50.1 546.4M47.3 548.7L52.9 548.7L52.9 552.5L47.3 552.5L47.3 548.7M47.9 554.6L52.2 554.6L52.2 559.0L47.9 559.0L47.9 554.6M47.9 556.8L52.2 556.8M47.9 560.9L52.2 560.9L52.2 565.3L47.9 565.3L47.9 560.9M47.9 563.1L52.2 563.1M49.8 611.5L49.8 615.9M49.8 613.5L52.9 613.5M47.0 615.9L53.2 615.9M49.8 617.8L49.8 622.2M49.8 619.8L52.9 619.8M47.0 622.2L53.2 622.2M47.6 624.5L52.5 624.5M48.2 626.3L51.9 626.3M47.0 628.3L53.2 628.3M47.3 681.4L52.9 681.4L52.9 685.2L47.3 685.2L47.3 681.4M47.3 687.7L52.9 687.7M50.1 687.7L50.1 691.5M47.0 691.5L53.2 691.5M47.3 694.0L52.9 694.0L52.9 697.8L47.3 697.8L47.3 694.0M49.8 699.9L49.8 704.3M49.8 701.9L52.9 701.9M47.0 704.3L53.2 704.3M49.8 750.5L49.8 754.9M49.8 752.5L52.9 752.5M47.0 754.9L53.2 754.9M47.3 758.3L47.3 761.2L52.9 761.2L52.9 758.3M50.1 756.8L50.1 761.2M49.8 763.1L49.8 767.5M49.8 765.1L52.9 765.1M47.0 767.5L53.2 767.5M47.6 820.2L47.6 823.5L47.0 824.4M50.1 820.4L50.1 824.0M52.5 820.0L52.5 824.4M47.3 826.7L52.9 826.7L52.9 830.5L47.3 830.5L47.3 826.7M47.6 833.0L52.5 833.0M48.2 834.8L51.9 834.8M47.0 836.8L53.2 836.8M49.8 838.9L49.8 843.3M49.8 840.9L52.9 840.9M47.0 843.3L53.2 843.3" stroke="#b8b8b8" stroke-width="1.05" fill="none"/></svg>
<div style="position:absolute;left:861px;top:97px;width:20px;height:767px;background:#4b4b4b;"></div>
<div style="position:absolute;left:861px;top:115px;width:4px;height:732px;background:#454545;"></div>
<div style="position:absolute;left:870px;top:105px;width:4px;height:4px;background:#8c8c8c;border-radius:2px"></div>
<div style="position:absolute;left:865px;top:316px;width:13px;height:296px;background:linear-gradient(90deg,#b0b0b0,#8a8a8a 40%,#6e6e6e);border-radius:1px"></div>
<svg style="position:absolute;left:868px;top:830px;" width="8" height="8" viewBox="0 0 8 8"><path d="M1 1L6 4L3 5L2 7Z" fill="#b0b0b0"/></svg>
<div style="position:absolute;left:861px;top:845px;width:20px;height:19px;background:#525252;"></div>
<div style="position:absolute;left:43px;top:846px;width:818px;height:18px;background:#3d3d3d;"></div>
<div style="position:absolute;left:43px;top:846px;width:243px;height:18px;background:#545454;"></div>
<div style="position:absolute;left:91px;top:848px;width:1px;height:16px;background:#444;"></div>
<svg style="position:absolute;left:51.2px;top:850.2px" width="10.0" height="12.0" viewBox="0 0 10.0 12.0"><path d="M4.4 0.8L4.4 10.8M4.4 5.3L8.4 5.3M0.8 10.8L8.8 10.8" fill="none" stroke="#f0f0f0" stroke-width="1.70" stroke-linecap="square" stroke-linejoin="miter" opacity="1"/></svg>
<div style="position:absolute;left:60px;top:849px;font-size:11px;line-height:13px;font-weight:bold;color:#f2f2f2">6</div>
<svg style="position:absolute;left:68.2px;top:850.2px" width="11.0" height="12.0" viewBox="0 0 11.0 12.0"><path d="M0.8 0.8L9.8 0.8L9.8 10.8L0.8 10.8L0.8 0.8M0.8 5.8L9.8 5.8M5.3 0.8L5.3 10.8" fill="none" stroke="#f0f0f0" stroke-width="1.60" stroke-linecap="square" stroke-linejoin="miter" opacity="1"/></svg>
<div style="position:absolute;left:80px;top:853px;width:2px;height:2px;background:#eee;"></div>
<div style="position:absolute;left:80px;top:858px;width:2px;height:2px;background:#eee;"></div>
<svg style="position:absolute;left:95px;top:850px;" width="6" height="12" viewBox="0 0 6 12"><path d="M1 2H4M2.5 2V5M1 8H4M2.5 8V11" stroke="#ddd" stroke-width="1.1"/></svg>
<svg style="position:absolute;left:135.2px;top:851.2px" width="6.8" height="10.0" viewBox="0 0 6.8 10.0"><path d="M3.2 0.8L3.2 2.0M1.0 2.4L5.6 2.4M1.3 2.4L1.3 6.4L0.8 8.8" fill="none" stroke="#ddd" stroke-width="1.20" stroke-linecap="square" stroke-linejoin="miter" opacity="1"/></svg>
<svg style="position:absolute;left:146.2px;top:850.2px" width="20.5" height="12.0" viewBox="0 0 20.5 12.0"><path d="M1.7 1.8L8.5 1.0M0.8 4.8L9.3 4.8M1.7 7.6L8.5 7.6M5.5 1.3L5.5 10.8L3.8 10.0M12.1 0.8L18.0 0.8L18.0 10.8L12.1 10.8L12.1 0.8M12.1 5.8L18.0 5.8" fill="none" stroke="#f2f2f2" stroke-width="1.60" stroke-linecap="square" stroke-linejoin="miter" opacity="1"/></svg>
<svg style="position:absolute;left:167px;top:851px;" width="10" height="11" viewBox="0 0 10 11"><path d="M2 1V8H4M5 8L8 5V9Z" stroke="#f0f0f0" stroke-width="1.5" fill="#f0f0f0"/></svg>
<svg style="position:absolute;left:182.2px;top:850.2px" width="9.5" height="12.0" viewBox="0 0 9.5 12.0"><path d="M1.2 4.3L1.2 10.8L7.9 10.8L7.9 4.3M4.5 0.8L4.5 10.8" fill="none" stroke="#f2f2f2" stroke-width="1.60" stroke-linecap="square" stroke-linejoin="miter" opacity="1"/></svg>
<div style="position:absolute;left:193px;top:859px;width:2px;height:2px;background:#eee;"></div>
<svg style="position:absolute;left:198px;top:850px;" width="12" height="12" viewBox="0 0 12 12"><path d="M1 10L7 1L9 10M3 7H10" stroke="#f2f2f2" stroke-width="1.7" fill="none"/></svg>
<svg style="position:absolute;left:209.2px;top:850.2px" width="21.0" height="12.0" viewBox="0 0 21.0 12.0"><path d="M2.6 0.8L8.4 0.8L8.4 10.8L7.1 10.3M2.6 0.8L2.6 7.8L1.2 10.8M2.6 4.1L8.4 4.1M2.6 7.0L8.4 7.0M13.1 0.8L10.8 5.3M12.2 3.8L12.2 10.8M15.3 0.8L14.4 3.8M14.9 2.8L19.8 2.8M16.2 2.8L16.2 10.8M16.2 5.8L19.4 5.8M16.2 8.8L19.4 8.8" fill="none" stroke="#f2f2f2" stroke-width="1.60" stroke-linecap="square" stroke-linejoin="miter" opacity="1"/></svg>
<svg style="position:absolute;left:269px;top:850px;" width="10" height="13" viewBox="0 0 10 13"><path d="M2 3V1H7V5M7 9V12H2" stroke="#dcdcdc" stroke-width="1.5" fill="none"/></svg>
<svg style="position:absolute;left:850px;top:852px;" width="8" height="8" viewBox="0 0 8 8"><path d="M2 1L6 4L2 7" stroke="#888" stroke-width="1.2" fill="none"/></svg>
<div style="position:absolute;left:881px;top:70px;width:271px;height:15px;background:#3a3a3a;"></div>
<div style="position:absolute;left:907px;top:77px;width:9px;height:3px;background:#e2e2e2;border-radius:1px"></div>
<div style="position:absolute;left:1145px;top:77px;width:7px;height:3px;background:#e2e2e2;"></div>
<div style="position:absolute;left:881px;top:85px;width:2px;height:779px;background:#3e3e3e;"></div>
<div style="position:absolute;left:883px;top:85px;width:37px;height:779px;background:#545454;"></div>
<div style="position:absolute;left:919px;top:85px;width:2px;height:779px;background:#3e3e3e;"></div>
<div style="position:absolute;left:883px;top:124.5px;width:36px;height:1.5px;background:#3d3d3d;"></div>
<div style="position:absolute;left:883px;top:161.5px;width:36px;height:1.5px;background:#3d3d3d;"></div>
<div style="position:absolute;left:883px;top:198px;width:36px;height:1.5px;background:#3d3d3d;"></div>
<div style="position:absolute;left:883px;top:234.5px;width:36px;height:1.5px;background:#3d3d3d;"></div>
<div style="position:absolute;left:883px;top:271px;width:36px;height:1.5px;background:#3d3d3d;"></div>
<svg style="position:absolute;left:894.2px;top:96.7px" width="16.0" height="16.0" viewBox="0 0 16.0 16.0"><path d="M4.3 0.8L0.8 7.1M2.9 5.0L2.9 14.8M7.8 0.8L6.4 5.0M7.1 3.6L14.8 3.6M9.2 3.6L9.2 14.8M9.2 7.8L14.1 7.8M9.2 12.0L14.1 12.0" fill="none" stroke="#f2f2f2" stroke-width="2.40" stroke-linecap="square" stroke-linejoin="miter" opacity="1"/></svg>
<svg style="position:absolute;left:894.2px;top:133.7px" width="16.0" height="16.0" viewBox="0 0 16.0 16.0"><path d="M2.9 0.8L12.7 0.8L12.7 14.8L2.9 14.8L2.9 0.8M2.9 7.8L12.7 7.8" fill="none" stroke="#f2f2f2" stroke-width="2.40" stroke-linecap="square" stroke-linejoin="miter" opacity="1"/></svg>
<svg style="position:absolute;left:894.2px;top:171.7px" width="16.0" height="16.0" viewBox="0 0 16.0 16.0"><path d="M1.5 4.3L14.1 4.3L14.1 10.6L1.5 10.6L1.5 4.3M7.8 0.8L7.8 14.8" fill="none" stroke="#f2f2f2" stroke-width="2.40" stroke-linecap="square" stroke-linejoin="miter" opacity="1"/></svg>
<svg style="position:absolute;left:894.2px;top:208.7px" width="16.0" height="16.0" viewBox="0 0 16.0 16.0"><path d="M0.8 4.3L14.8 4.3M7.8 0.8L7.8 7.8M2.9 7.8L12.7 7.8L12.7 14.8L2.9 14.8L2.9 7.8" fill="none" stroke="#f2f2f2" stroke-width="2.40" stroke-linecap="square" stroke-linejoin="miter" opacity="1"/></svg>
<svg style="position:absolute;left:894.2px;top:245.7px" width="16.0" height="16.0" viewBox="0 0 16.0 16.0"><path d="M1.5 0.8L1.5 14.8M1.5 0.8L6.4 0.8L6.4 5.7L1.5 5.7M9.2 0.8L14.1 0.8L14.1 14.8L12.0 14.1M9.2 0.8L9.2 5.7L14.1 5.7" fill="none" stroke="#f2f2f2" stroke-width="2.40" stroke-linecap="square" stroke-linejoin="miter" opacity="1"/></svg>
<div style="position:absolute;left:921px;top:85px;width:231px;height:779px;background:#535353;"></div>
<div style="position:absolute;left:921px;top:85px;width:231px;height:21px;background:#3e3e3e;"></div>
<div style="position:absolute;left:921px;top:85px;width:44px;height:22px;background:#535353;"></div>
<div style="position:absolute;left:966px;top:85px;width:32px;height:21px;background:#464646;"></div>
<svg style="position:absolute;left:929.2px;top:89.2px" width="24.5" height="13.0" viewBox="0 0 24.5 13.0"><path d="M0.8 0.8L5.8 0.8L5.8 11.8L0.8 11.8L0.8 0.8M0.8 6.3L5.8 6.3M7.4 0.8L11.8 0.8L11.8 11.8L10.2 11.2M7.4 0.8L7.4 7.4M7.4 4.1L11.8 4.1M7.4 7.4L11.8 7.4M16.1 0.8L13.4 3.9M15.6 1.9L20.6 1.9L18.9 4.1M13.4 4.6L22.2 4.6L22.2 8.0L13.4 8.0L13.4 4.6M17.8 4.6L17.8 8.0M13.4 8.0L13.4 10.7L23.3 10.7L23.3 9.1" fill="none" stroke="#f6f6f6" stroke-width="1.80" stroke-linecap="square" stroke-linejoin="miter" opacity="1"/></svg>
<svg style="position:absolute;left:970.2px;top:90.2px" width="22.5" height="12.0" viewBox="0 0 22.5 12.0"><path d="M1.3 0.8L10.3 0.8L10.3 10.8L8.8 10.3M1.3 0.8L1.3 10.8M3.8 3.3L7.8 3.3M3.8 5.3L7.8 5.3L7.8 8.8L3.8 8.8L3.8 5.3M11.3 0.8L21.3 0.8L21.3 10.8L11.3 10.8L11.3 0.8M14.3 2.8L18.3 2.8L16.8 5.3L13.8 5.3M13.8 7.0L19.3 7.0M14.8 8.8L18.3 8.8" fill="none" stroke="#c9c9c9" stroke-width="1.20" stroke-linecap="square" stroke-linejoin="miter" opacity="1"/></svg>
<svg style="position:absolute;left:1143.2px;top:89.2px" width="11.0" height="12.0" viewBox="0 0 11.0 12.0"><path d="M2.6 0.8L8.4 0.8L8.4 10.8L7.1 10.3M2.6 0.8L2.6 7.8L1.2 10.8M2.6 4.1L8.4 4.1M2.6 7.0L8.4 7.0" fill="none" stroke="#c0c0c0" stroke-width="1.20" stroke-linecap="square" stroke-linejoin="miter" opacity="1"/></svg>
<div style="position:absolute;left:939px;top:126px;width:22px;height:22px;background:#ffffff;"></div>
<div style="position:absolute;left:930px;top:116px;width:23.5px;height:23px;background:#000;border:2.5px solid #fff"></div>
<div style="position:absolute;left:967px;top:115px;width:141px;height:150px;background:linear-gradient(to bottom,rgba(0,0,0,0) 0%,rgba(0,0,0,.04) 10%,rgba(0,0,0,.32) 50%,rgba(0,0,0,.72) 75%,rgba(0,0,0,.95) 93%,#000 100%),linear-gradient(to right,#fff 0%,#ff7474 50%,#ff0808 90%,#ff0000 100%)"></div>
<div style="position:absolute;left:1119px;top:115px;width:20px;height:150px;background:linear-gradient(to bottom,#e00000 0%,#ff0000 4%,#ff00ff 20%,#0000ff 36%,#00ffff 52%,#00ff00 68%,#ffff00 84%,#ff8000 93%,#ff0000 100%)"></div>
<div style="position:absolute;left:921px;top:271px;width:231px;height:13px;background:#3d3d3d;"></div>
<div style="position:absolute;left:1143px;top:277px;width:9px;height:2.5px;background:#d8d8d8;"></div>
<div style="position:absolute;left:921px;top:284px;width:231px;height:21px;background:#3e3e3e;"></div>
<div style="position:absolute;left:921px;top:284px;width:40px;height:22px;background:#535353;"></div>
<div style="position:absolute;left:963px;top:284px;width:30px;height:21px;background:#464646;"></div>
<svg style="position:absolute;left:928.2px;top:288.2px" width="24.5" height="13.0" viewBox="0 0 24.5 13.0"><path d="M2.5 1.4L10.7 1.4L10.7 3.5L2.5 3.5M2.5 1.4L2.5 3.5M0.8 5.4L11.8 5.4M6.3 3.5L6.3 5.4M1.9 7.4L10.7 7.4M6.3 7.4L6.3 11.8M3.5 9.6L3.5 11.8M0.8 11.8L11.8 11.8M12.3 3.5L23.3 3.5M17.8 0.8L17.8 6.3M14.0 6.3L21.6 6.3L21.6 11.8L14.0 11.8L14.0 6.3" fill="none" stroke="#f6f6f6" stroke-width="1.80" stroke-linecap="square" stroke-linejoin="miter" opacity="1"/></svg>
<svg style="position:absolute;left:967.2px;top:289.2px" width="21.5" height="12.0" viewBox="0 0 21.5 12.0"><path d="M0.8 3.3L10.3 3.3M5.5 0.8L5.5 5.8M2.2 5.8L8.9 5.8L8.9 10.8L2.2 10.8L2.2 5.8M12.2 1.3L19.4 1.3L19.4 3.3L12.2 3.3M12.2 1.3L12.2 3.3M10.8 5.0L20.3 5.0M15.6 3.3L15.6 5.0M11.8 6.8L19.4 6.8M15.6 6.8L15.6 10.8M13.2 8.8L13.2 10.8M10.8 10.8L20.3 10.8" fill="none" stroke="#c9c9c9" stroke-width="1.20" stroke-linecap="square" stroke-linejoin="miter" opacity="1"/></svg>
<svg style="position:absolute;left:1142.2px;top:289.2px" width="11.0" height="12.0" viewBox="0 0 11.0 12.0"><path d="M1.2 0.8L9.3 0.8L9.3 10.8L8.0 10.3M1.2 0.8L1.2 10.8M3.5 3.3L7.1 3.3M3.5 5.3L7.1 5.3L7.1 8.8L3.5 8.8L3.5 5.3" fill="none" stroke="#c0c0c0" stroke-width="1.20" stroke-linecap="square" stroke-linejoin="miter" opacity="1"/></svg>
<div style="position:absolute;left:933px;top:312px;font-size:17px;line-height:17px;color:#f0f0f0;letter-spacing:-0.5px">20</div>
<svg style="position:absolute;left:956.2px;top:313.2px" width="10.0" height="10.0" viewBox="0 0 10.0 10.0"><path d="M1.6 1.6L8.0 1.0M0.8 4.0L8.8 4.0M1.6 6.2L8.0 6.2M5.2 1.2L5.2 8.8L3.6 8.2" fill="none" stroke="#f0f0f0" stroke-width="1.20" stroke-linecap="square" stroke-linejoin="miter" opacity="1"/></svg>
<svg style="position:absolute;left:963px;top:336px;" width="15" height="17" viewBox="0 0 15 17"><path d="M1 13L3 9H12L14 13Z" fill="#e6e6e6" fill-rule="evenodd"/><path d="M3 2L5 8M11 1L9 8M7 0V9" fill="none" stroke="#e6e6e6" stroke-width="1.7" stroke-linecap="square"/></svg>
<svg style="position:absolute;left:985px;top:336px;" width="16" height="17" viewBox="0 0 16 17"><path d="M0 0H5L6 11H13V3H15V14H3Z" fill="#eeeeee" fill-rule="evenodd"/><path d="M7 5V11M10 4V11" fill="none" stroke="#eeeeee" stroke-width="1.7" stroke-linecap="square"/></svg>
<svg style="position:absolute;left:1005px;top:336px;" width="17" height="17" viewBox="0 0 17 17"><path d="M1 8L6 3L8 5L13 2M3 11H13M8 6V14M2 5L4 6M11 9L15 11" fill="none" stroke="#e2e2e2" stroke-width="1.7" stroke-linecap="square"/></svg>
<svg style="position:absolute;left:1026px;top:336px;" width="14" height="17" viewBox="0 0 14 17"><path d="M0 0H13V14H0ZM6 2L7 11H8L7.5 2Z" fill="#f0f0f0" fill-rule="evenodd"/></svg>
<svg style="position:absolute;left:1045px;top:336px;" width="15" height="17" viewBox="0 0 15 17"><path d="M3 9L11 5V8L5 12Z" fill="#dcdcdc" fill-rule="evenodd"/><path d="M1 1H13V5M1 1V11L4 13H9M3 11L12 5M1 5H13" fill="none" stroke="#dcdcdc" stroke-width="1.7" stroke-linecap="square"/></svg>
<svg style="position:absolute;left:1065px;top:336px;" width="16" height="17" viewBox="0 0 16 17"><path d="M2 1H14M4 4H12V8H4ZM1 10H15M8 1V14M4 6H12" fill="none" stroke="#dedede" stroke-width="1.7" stroke-linecap="square"/></svg>
<svg style="position:absolute;left:955px;top:362px;" width="16" height="17" viewBox="0 0 16 17"><path d="M1 4H15V15H1ZM5 7H8V10H5Z" fill="#e8e8e8" fill-rule="evenodd"/><path d="M1 4L8 0L15 4" fill="none" stroke="#e8e8e8" stroke-width="1.7" stroke-linecap="square"/></svg>
<svg style="position:absolute;left:981px;top:362px;" width="17" height="17" viewBox="0 0 17 17"><path d="M2 1H13M3 1V12M3 4H12V8H3M7 4V12M3 12H11L14 10M11 13L15 15" fill="none" stroke="#dadada" stroke-width="1.7" stroke-linecap="square"/></svg>
<svg style="position:absolute;left:1003px;top:362px;" width="17" height="17" viewBox="0 0 17 17"><path d="M4 3L9 6L14 14H11L12 16H9L8 13H4Z" fill="#ececec" fill-rule="evenodd"/><path d="M1 0L6 3" fill="none" stroke="#ececec" stroke-width="1.7" stroke-linecap="square"/></svg>
<svg style="position:absolute;left:1026px;top:362px;" width="17" height="17" viewBox="0 0 17 17"><path d="M9 0L1 15M7 6L14 14" fill="none" stroke="#dcdcdc" stroke-width="1.7" stroke-linecap="square"/></svg>
<svg style="position:absolute;left:1047px;top:362px;" width="18" height="17" viewBox="0 0 18 17"><path d="M1 1H15V14L12 16H3V1M5 5H12V12H5ZM5 8H12" fill="none" stroke="#dedede" stroke-width="1.7" stroke-linecap="square"/></svg>
<svg style="position:absolute;left:1073px;top:362px;" width="22" height="17" viewBox="0 0 22 17"><path d="M1 2H20V9H1ZM1 6H20M7 2V6M13 9V14M9 14H17M20 9V14" fill="none" stroke="#e2e2e2" stroke-width="1.7" stroke-linecap="square"/></svg>
<svg style="position:absolute;left:966px;top:390px;" width="15" height="17" viewBox="0 0 15 17"><path d="M4 4H11V7H4Z" fill="#a9a9a9" fill-rule="evenodd"/><path d="M1 1H13M2 1V9L0 13M4 4H12V7H4M4 10H13M8 7V13" fill="none" stroke="#a9a9a9" stroke-width="1.7" stroke-linecap="square"/></svg>
<svg style="position:absolute;left:986px;top:390px;" width="15" height="17" viewBox="0 0 15 17"><path d="M0 1H14V13H3L1 3M4 5H11V10H4Z" fill="none" stroke="#e0e0e0" stroke-width="1.7" stroke-linecap="square"/></svg>
<svg style="position:absolute;left:1006px;top:390px;" width="14" height="17" viewBox="0 0 14 17"><path d="M0 2H13M2 5H11V8H2M0 10H13M7 0V14L5 13M2 6.5H11" fill="none" stroke="#dedede" stroke-width="1.7" stroke-linecap="square"/></svg>
<svg style="position:absolute;left:1025px;top:390px;" width="14" height="17" viewBox="0 0 14 17"><path d="M5 11Q5 5 11 4V11Z" fill="#ececec" fill-rule="evenodd"/><path d="M1 1H12V13H1ZM3 3V11" fill="none" stroke="#ececec" stroke-width="1.7" stroke-linecap="square"/></svg>
<svg style="position:absolute;left:1044px;top:390px;" width="14" height="17" viewBox="0 0 14 17"><path d="M2 1H12M3 4H12M3 7H12M3 10H12M4 1V10M8 1V10M12 1V10M0 13H13M1 4L2 13" fill="none" stroke="#dedede" stroke-width="1.7" stroke-linecap="square"/></svg>
<svg style="position:absolute;left:1064px;top:390px;" width="14" height="17" viewBox="0 0 14 17"><path d="M1 1H12V13H1ZM5 1V13M9 1V13M1 9H12" fill="none" stroke="#d4d4d4" stroke-width="1.7" stroke-linecap="square"/></svg>
<div style="position:absolute;left:921px;top:420px;width:231px;height:1px;background:#3a3a3a;"></div>
<div style="position:absolute;left:921px;top:421px;width:231px;height:20px;background:#3e3e3e;"></div>
<div style="position:absolute;left:921px;top:421px;width:40px;height:21px;background:#535353;"></div>
<div style="position:absolute;left:963px;top:421px;width:31px;height:20px;background:#454545;"></div>
<div style="position:absolute;left:1000px;top:421px;width:29px;height:20px;background:#454545;"></div>
<div style="position:absolute;left:1039px;top:421px;width:25px;height:20px;background:#454545;"></div>
<svg style="position:absolute;left:928.2px;top:425.2px" width="24.5" height="13.0" viewBox="0 0 24.5 13.0"><path d="M4.1 0.8L9.6 0.8L9.6 4.6L4.1 4.6L4.1 0.8M0.8 6.3L11.8 6.3M6.9 4.6L6.9 11.8M6.9 6.3L1.9 11.2M6.9 6.3L11.8 11.2M2.5 8.5L4.1 9.6M9.6 8.0L11.2 9.1M12.3 1.7L23.3 1.7M21.6 1.7L21.6 11.8L19.5 10.7M13.4 4.6L18.4 4.6L18.4 9.1L13.4 9.1L13.4 4.6" fill="none" stroke="#f6f6f6" stroke-width="1.90" stroke-linecap="square" stroke-linejoin="miter" opacity="1"/></svg>
<svg style="position:absolute;left:966.2px;top:426.2px" width="22.5" height="12.0" viewBox="0 0 22.5 12.0"><path d="M1.3 0.8L1.3 10.8M1.3 0.8L4.8 0.8L4.8 4.3L1.3 4.3M6.8 0.8L10.3 0.8L10.3 10.8L8.8 10.3M6.8 0.8L6.8 4.3L10.3 4.3M11.3 1.8L12.3 3.3M11.3 5.3L12.3 6.8M11.3 10.8L12.8 7.8M14.3 0.8L20.3 0.8L20.3 6.8L14.3 6.8L14.3 0.8M14.3 3.8L20.3 3.8M15.8 7.3L14.3 10.8M18.8 7.3L20.8 10.8" fill="none" stroke="#c9c9c9" stroke-width="1.25" stroke-linecap="square" stroke-linejoin="miter" opacity="1"/></svg>
<svg style="position:absolute;left:1003.2px;top:426.2px" width="22.5" height="12.0" viewBox="0 0 22.5 12.0"><path d="M0.8 2.0L5.3 2.0M3.0 0.8L3.0 10.8M3.0 3.8L0.8 8.3M3.0 3.8L5.3 6.8M6.3 1.8L10.8 1.8M6.8 4.3L10.3 4.3L10.3 7.8L6.8 7.8L6.8 4.3M8.6 1.8L8.6 10.8M13.3 0.8L19.8 0.8L19.8 10.8L18.3 10.3M13.3 0.8L13.3 7.8L11.8 10.8M13.3 4.1L19.8 4.1M13.3 7.0L19.8 7.0" fill="none" stroke="#d4d4d4" stroke-width="1.25" stroke-linecap="square" stroke-linejoin="miter" opacity="1"/></svg>
<svg style="position:absolute;left:1043.2px;top:427.2px" width="13.7" height="11.0" viewBox="0 0 13.7 11.0"><path d="M2.0 1.2L3.1 2.6M0.8 4.4L3.1 4.4L3.1 8.4L4.9 7.5M6.1 0.8L12.5 0.8L12.5 9.8L10.7 9.3M6.1 0.8L6.1 7.1L5.2 9.8M7.6 3.0L11.1 3.0M9.2 1.9L9.2 4.4M7.6 5.8L11.1 5.8L11.1 8.0L7.6 8.0L7.6 5.8" fill="none" stroke="#bcbcbc" stroke-width="1.20" stroke-linecap="square" stroke-linejoin="miter" opacity="1"/></svg>
<svg style="position:absolute;left:1142.2px;top:426.2px" width="11.0" height="12.0" viewBox="0 0 11.0 12.0"><path d="M2.6 0.8L8.4 0.8L8.4 10.8L7.1 10.3M2.6 0.8L2.6 7.8L1.2 10.8M2.6 4.1L8.4 4.1M2.6 7.0L8.4 7.0" fill="none" stroke="#c0c0c0" stroke-width="1.20" stroke-linecap="square" stroke-linejoin="miter" opacity="1"/></svg>
<div style="position:absolute;left:928px;top:450px;width:78px;height:20px;background:#4f4f4f;border:1px solid #6c6c6c"></div>
<svg style="position:absolute;left:931.2px;top:453.2px" width="37.8" height="13.5" viewBox="0 0 37.8 13.5"><path d="M0.8 0.8L11.7 0.8L11.7 12.3L0.8 12.3L0.8 0.8M3.2 3.7L9.3 3.7M3.2 6.5L9.3 6.5M3.2 9.4L9.3 9.4M6.3 3.7L6.3 9.4M13.2 2.2L18.1 2.2M15.6 0.8L15.6 12.3M15.6 4.2L13.2 9.4M15.6 4.2L18.1 7.7M19.2 2.0L24.1 2.0M19.8 4.8L23.6 4.8L23.6 8.8L19.8 8.8L19.8 4.8M21.7 2.0L21.7 12.3M25.6 3.7L36.6 3.7M31.1 0.8L31.1 6.5M27.3 6.5L34.9 6.5L34.9 12.3L27.3 12.3L27.3 6.5" fill="none" stroke="#f4f4f4" stroke-width="2.00" stroke-linecap="square" stroke-linejoin="miter" opacity="1"/></svg>
<div style="position:absolute;left:994px;top:459px;width:6px;height:2.5px;background:#9a9a9a;border-radius:1px"></div>
<svg style="position:absolute;left:1020.2px;top:454.2px" width="15.0" height="12.5" viewBox="0 0 15.0 12.5"><path d="M0.8 3.4L13.8 3.4M7.3 0.8L7.3 6.0M2.8 6.0L11.8 6.0L11.8 11.3L2.8 11.3L2.8 6.0" fill="none" stroke="#b6b6b6" stroke-width="2.70" stroke-linecap="square" stroke-linejoin="miter" opacity="1"/></svg>
<svg style="position:absolute;left:1044.2px;top:454.2px" width="13.0" height="12.5" viewBox="0 0 13.0 12.5"><path d="M1.4 0.8L1.4 11.3M1.4 0.8L5.2 0.8L5.2 4.5L1.4 4.5M7.4 0.8L11.2 0.8L11.2 11.3L9.6 10.8M7.4 0.8L7.4 4.5L11.2 4.5" fill="none" stroke="#b6b6b6" stroke-width="2.70" stroke-linecap="square" stroke-linejoin="miter" opacity="1"/></svg>
<svg style="position:absolute;left:1067.2px;top:454.2px" width="13.0" height="12.5" viewBox="0 0 13.0 12.5"><path d="M1.4 0.8L11.2 0.8L11.2 4.0L1.4 4.0M1.4 0.8L1.4 8.2L0.8 11.3M3.5 5.2L10.7 5.2M3.0 7.1L11.8 7.1M6.9 4.0L6.9 7.1M4.1 8.4L10.7 8.4L10.7 11.3L4.1 11.3L4.1 8.4" fill="none" stroke="#b6b6b6" stroke-width="2.70" stroke-linecap="square" stroke-linejoin="miter" opacity="1"/></svg>
<svg style="position:absolute;left:1090.2px;top:454.2px" width="12.0" height="12.5" viewBox="0 0 12.0 12.5"><path d="M1.3 0.8L10.3 0.8L10.3 11.3L8.8 10.8M1.3 0.8L1.3 11.3M3.8 3.4L7.8 3.4M3.8 5.5L7.8 5.5L7.8 9.2L3.8 9.2L3.8 5.5" fill="none" stroke="#b6b6b6" stroke-width="2.70" stroke-linecap="square" stroke-linejoin="miter" opacity="1"/></svg>
<svg style="position:absolute;left:1113.2px;top:454.2px" width="15.0" height="12.5" viewBox="0 0 15.0 12.5"><path d="M1.5 3.4L13.2 3.4L13.2 8.2L1.5 8.2L1.5 3.4M7.3 0.8L7.3 11.3" fill="none" stroke="#b6b6b6" stroke-width="2.70" stroke-linecap="square" stroke-linejoin="miter" opacity="1"/></svg>
<div style="position:absolute;left:1140px;top:449px;width:12px;height:22px;background:#4a4a4a;border:1px solid #6a6a6a"></div>
<div style="position:absolute;left:1146px;top:459px;width:2px;height:2px;background:#ddd;"></div>
<div style="position:absolute;left:921px;top:473px;width:231px;height:1.5px;background:#3f3f3f;"></div>
<div style="position:absolute;left:928px;top:479px;width:109px;height:19px;background:linear-gradient(#757575,#606060);border:1px solid #7a7a7a;border-radius:1px"></div>
<svg style="position:absolute;left:932.2px;top:482.2px" width="26.1" height="13.0" viewBox="0 0 26.1 13.0"><path d="M0.8 0.8L6.0 0.8L6.0 11.8L0.8 11.8L0.8 0.8M0.8 6.3L6.0 6.3M7.7 0.8L12.4 0.8L12.4 11.8L10.6 11.2M7.7 0.8L7.7 7.4M7.7 4.1L12.4 4.1M7.7 7.4L12.4 7.4M18.0 0.8L20.3 1.7M13.4 3.0L24.9 3.0M15.7 5.0L22.6 5.0M15.7 6.9L22.6 6.9M15.7 8.7L22.6 8.7L22.6 11.8L15.7 11.8L15.7 8.7" fill="none" stroke="#f4f4f4" stroke-width="1.90" stroke-linecap="square" stroke-linejoin="miter" opacity="1"/></svg>
<div style="position:absolute;left:1029px;top:487px;width:3px;height:3px;background:#c0c0c0;border-radius:1px"></div>
<svg style="position:absolute;left:1049.2px;top:481.2px" width="41.0" height="14.0" viewBox="0 0 41.0 14.0"><path d="M0.8 0.8L6.2 0.8L6.2 12.8L0.8 12.8L0.8 0.8M0.8 6.8L6.2 6.8M8.0 0.8L12.8 0.8L12.8 12.8L11.0 12.2M8.0 0.8L8.0 8.0M8.0 4.4L12.8 4.4M8.0 8.0L12.8 8.0M14.3 3.8L26.3 3.8M20.3 0.8L20.3 6.8M16.1 6.8L24.5 6.8L24.5 12.8L16.1 12.8L16.1 6.8M32.6 0.8L35.0 1.8M27.8 3.2L39.8 3.2M30.2 5.4L37.4 5.4M30.2 7.4L37.4 7.4M30.2 9.4L37.4 9.4L37.4 12.8L30.2 12.8L30.2 9.4" fill="none" stroke="#f4f4f4" stroke-width="2.00" stroke-linecap="square" stroke-linejoin="miter" opacity="1"/></svg>
<div style="position:absolute;left:1100px;top:480px;width:35px;height:18px;background:#333;"></div>
<svg style="position:absolute;left:1103.2px;top:483.2px" width="26.8" height="11.5" viewBox="0 0 26.8 11.5"><path d="M0.8 0.8L6.0 0.8L6.0 10.3L0.8 10.3L0.8 0.8M2.4 3.7L4.5 3.7L4.5 7.4L2.4 7.4L2.4 3.7M7.6 3.2L12.3 3.2L12.3 7.4L7.6 7.4L7.6 3.2M9.9 0.8L9.9 10.3M13.9 1.8L14.4 3.2M13.9 5.1L14.4 6.5M13.9 10.3L14.6 7.4M15.4 0.8L18.6 0.8L18.6 6.5L15.4 6.5L15.4 0.8M15.4 3.7L18.6 3.7M16.2 7.0L15.4 10.3M17.8 7.0L18.8 10.3M20.9 0.8L25.1 0.8L25.1 3.7L20.9 3.7M20.9 0.8L20.9 6.5L20.4 10.3M21.7 5.1L25.3 5.1L25.3 10.3L21.7 10.3L21.7 5.1M22.9 5.1L22.9 10.3M24.1 5.1L24.1 10.3M21.7 7.6L25.3 7.6" fill="none" stroke="#dedede" stroke-width="1.20" stroke-linecap="square" stroke-linejoin="miter" opacity="1"/></svg>
<div style="position:absolute;left:1137px;top:479px;width:15px;height:20px;background:linear-gradient(#707070,#5c5c5c)"></div>
<div style="position:absolute;left:1144px;top:487px;width:3px;height:3px;background:#d8d8d8;"></div>
<div style="position:absolute;left:921px;top:501.5px;width:231px;height:1.5px;background:#3f3f3f;"></div>
<svg style="position:absolute;left:929.2px;top:510.7px" width="20.0" height="12.0" viewBox="0 0 20.0 12.0"><path d="M2.6 0.8L17.0 0.8L17.0 4.8L2.6 4.8L2.6 0.8M2.6 2.8L17.0 2.8M0.8 6.3L18.8 6.3M4.4 7.8L15.2 7.8M9.8 4.8L9.8 10.8M0.8 10.8L18.8 10.8" fill="none" stroke="#bcbcbc" stroke-width="2.50" stroke-linecap="square" stroke-linejoin="miter" opacity="1"/></svg>
<svg style="position:absolute;left:959.2px;top:510.7px" width="22.0" height="12.0" viewBox="0 0 22.0 12.0"><path d="M2.8 0.8L18.8 0.8L18.8 4.8L2.8 4.8L2.8 0.8M2.8 2.8L18.8 2.8M0.8 6.3L20.8 6.3M4.8 7.8L16.8 7.8M10.8 4.8L10.8 10.8M0.8 10.8L20.8 10.8" fill="none" stroke="#bcbcbc" stroke-width="2.50" stroke-linecap="square" stroke-linejoin="miter" opacity="1"/></svg>
<svg style="position:absolute;left:989.2px;top:510.7px" width="14.0" height="12.0" viewBox="0 0 14.0 12.0"><path d="M5.0 0.8L2.0 3.6M4.4 1.8L9.8 1.8L8.0 3.8M2.0 4.3L11.6 4.3L11.6 7.3L2.0 7.3L2.0 4.3M6.8 4.3L6.8 7.3M2.0 7.3L2.0 9.8L12.8 9.8L12.8 8.3" fill="none" stroke="#bcbcbc" stroke-width="2.50" stroke-linecap="square" stroke-linejoin="miter" opacity="1"/></svg>
<svg style="position:absolute;left:1011.2px;top:510.7px" width="12.0" height="12.0" viewBox="0 0 12.0 12.0"><path d="M1.8 0.8L9.8 0.8L9.8 3.8L1.8 3.8M1.8 0.8L1.8 6.8L0.8 10.8M3.3 5.3L10.3 5.3L10.3 10.8L3.3 10.8L3.3 5.3M5.6 5.3L5.6 10.8M8.0 5.3L8.0 10.8M3.3 8.0L10.3 8.0" fill="none" stroke="#bcbcbc" stroke-width="2.50" stroke-linecap="square" stroke-linejoin="miter" opacity="1"/></svg>
<svg style="position:absolute;left:1034.2px;top:510.7px" width="11.0" height="12.0" viewBox="0 0 11.0 12.0"><path d="M0.8 2.0L4.8 2.0M2.8 0.8L2.8 10.8M2.8 3.8L0.8 8.3M2.8 3.8L4.8 6.8M5.8 1.8L9.8 1.8M6.2 4.3L9.3 4.3L9.3 7.8L6.2 7.8L6.2 4.3M7.8 1.8L7.8 10.8" fill="none" stroke="#bcbcbc" stroke-width="2.50" stroke-linecap="square" stroke-linejoin="miter" opacity="1"/></svg>
<svg style="position:absolute;left:1070.2px;top:509.2px" width="25.8" height="14.0" viewBox="0 0 25.8 14.0"><path d="M1.4 0.8L11.6 0.8L11.6 4.4L1.4 4.4M1.4 0.8L1.4 9.2L0.8 12.8M3.6 5.8L11.1 5.8M3.1 8.0L12.2 8.0M7.1 4.4L7.1 8.0M4.2 9.4L11.1 9.4L11.1 12.8L4.2 12.8L4.2 9.4M13.8 3.8L24.0 3.8L24.0 9.2L13.8 9.2L13.8 3.8M18.9 0.8L18.9 12.8" fill="none" stroke="#f4f4f4" stroke-width="2.00" stroke-linecap="square" stroke-linejoin="miter" opacity="1"/></svg>
<div style="position:absolute;left:1100px;top:507px;width:35px;height:19px;background:#333;"></div>
<svg style="position:absolute;left:1103.2px;top:510.2px" width="26.8" height="11.5" viewBox="0 0 26.8 11.5"><path d="M2.6 0.8L1.3 3.5M2.4 1.8L4.7 1.8L3.9 3.7M1.3 4.1L5.5 4.1L5.5 7.0L1.3 7.0L1.3 4.1M3.4 4.1L3.4 7.0M1.3 7.0L1.3 9.4L6.0 9.4L6.0 7.9M7.8 0.8L12.0 0.8L12.0 4.6L7.8 4.6L7.8 0.8M7.8 2.7L12.0 2.7M7.3 6.0L12.6 6.0M8.4 7.4L11.5 7.4M9.9 4.6L9.9 10.3M7.3 10.3L12.6 10.3M14.1 0.8L18.8 0.8L18.8 10.3L18.0 9.8M14.1 0.8L14.1 10.3M15.4 3.2L17.5 3.2M15.4 5.1L17.5 5.1L17.5 8.4L15.4 8.4L15.4 5.1M20.4 0.8L25.6 0.8L25.6 10.3L20.4 10.3L20.4 0.8M20.4 5.5L25.6 5.5M23.0 0.8L23.0 10.3" fill="none" stroke="#dedede" stroke-width="1.20" stroke-linecap="square" stroke-linejoin="miter" opacity="1"/></svg>
<div style="position:absolute;left:1137px;top:506px;width:15px;height:21px;background:linear-gradient(#707070,#5c5c5c)"></div>
<div style="position:absolute;left:1144px;top:515px;width:3px;height:3px;background:#d8d8d8;"></div>
<div style="position:absolute;left:921px;top:531px;width:231px;height:1px;background:#3f3f3f;"></div>
<div style="position:absolute;left:921px;top:532px;width:31px;height:36px;background:#5a5a5a;"></div>
<div style="position:absolute;left:952px;top:532px;width:189px;height:36px;background:#5c7ba4;"></div>
<div style="position:absolute;left:921px;top:568px;width:220px;height:1px;background:#474747;"></div>
<svg style="position:absolute;left:928px;top:542px;" width="18" height="16" viewBox="0 0 18 16"><path d="M2 8L9 2.5L16 8L9 13.5Z" fill="none" stroke="#c4c4c4" stroke-width="2.2" stroke-linejoin="round"/></svg>
<div style="position:absolute;left:921px;top:569px;width:31px;height:36px;background:#5a5a5a;"></div>
<div style="position:absolute;left:952px;top:569px;width:189px;height:36px;background:#696969;"></div>
<div style="position:absolute;left:921px;top:605px;width:220px;height:1px;background:#474747;"></div>
<svg style="position:absolute;left:928px;top:579px;" width="18" height="16" viewBox="0 0 18 16"><path d="M2 8L9 2.5L16 8L9 13.5Z" fill="none" stroke="#c4c4c4" stroke-width="2.2" stroke-linejoin="round"/></svg>
<div style="position:absolute;left:921px;top:606px;width:31px;height:36px;background:#5a5a5a;"></div>
<div style="position:absolute;left:952px;top:606px;width:189px;height:36px;background:#696969;"></div>
<div style="position:absolute;left:921px;top:642px;width:220px;height:1px;background:#474747;"></div>
<svg style="position:absolute;left:928px;top:616px;" width="18" height="16" viewBox="0 0 18 16"><path d="M2 8L9 2.5L16 8L9 13.5Z" fill="none" stroke="#c4c4c4" stroke-width="2.2" stroke-linejoin="round"/></svg>
<div style="position:absolute;left:921px;top:643px;width:31px;height:36px;background:#585858;"></div>
<div style="position:absolute;left:952px;top:643px;width:189px;height:36px;background:#5d5d5d;"></div>
<div style="position:absolute;left:921px;top:679px;width:220px;height:1px;background:#474747;"></div>
<svg style="position:absolute;left:928px;top:653px;" width="18" height="16" viewBox="0 0 18 16"><path d="M2 8L9 2.5L16 8L9 13.5Z" fill="none" stroke="#c4c4c4" stroke-width="2.2" stroke-linejoin="round"/></svg>
<div style="position:absolute;left:956px;top:536px;width:34px;height:29px;background:#fff;background-color:#fff;background-image:linear-gradient(45deg,#dedede 25%,transparent 25%,transparent 75%,#dedede 75%),linear-gradient(45deg,#dedede 25%,transparent 25%,transparent 75%,#dedede 75%);background-size:8px 8px;background-position:0 0,4px 4px;border:2px solid #0c0c0c;border-radius:2.5px"></div>
<div style="position:absolute;left:956px;top:573px;width:34px;height:29px;background:#fff;background-color:#fff;background-image:linear-gradient(45deg,#dedede 25%,transparent 25%,transparent 75%,#dedede 75%),linear-gradient(45deg,#dedede 25%,transparent 25%,transparent 75%,#dedede 75%);background-size:8px 8px;background-position:0 0,4px 4px;border:2px solid #0c0c0c;border-radius:2.5px"></div>
<div style="position:absolute;left:956px;top:610px;width:34px;height:29px;background:#fff;background-color:#fff;background-image:linear-gradient(45deg,#dedede 25%,transparent 25%,transparent 75%,#dedede 75%),linear-gradient(45deg,#dedede 25%,transparent 25%,transparent 75%,#dedede 75%);background-size:8px 8px;background-position:0 0,4px 4px;border:2px solid #0c0c0c;border-radius:2.5px"></div>
<svg style="position:absolute;left:1000.2px;top:543.2px" width="50.6" height="14.0" viewBox="0 0 50.6 14.0"><path d="M4.8 0.8L1.9 4.2M4.2 2.0L9.3 2.0L7.6 4.4M1.9 5.0L11.1 5.0L11.1 8.6L1.9 8.6L1.9 5.0M6.5 5.0L6.5 8.6M1.9 8.6L1.9 11.6L12.2 11.6L12.2 9.8M13.2 0.8L24.6 0.8L24.6 12.8L13.2 12.8L13.2 0.8M16.6 3.2L21.2 3.2L19.5 6.2L16.0 6.2M16.0 8.2L22.3 8.2M17.2 10.4L21.2 10.4M29.0 0.8L34.7 0.8L34.7 5.0L29.0 5.0L29.0 0.8M25.6 6.8L37.0 6.8M31.9 5.0L31.9 12.8M31.9 6.8L26.7 12.2M31.9 6.8L37.0 12.2M27.3 9.2L29.0 10.4M34.7 8.6L36.4 9.8M39.7 0.8L47.7 0.8L47.7 12.8L39.7 12.8L39.7 0.8M39.7 4.8L47.7 4.8M39.7 8.7L47.7 8.7" fill="none" stroke="#f6f6f6" stroke-width="1.90" stroke-linecap="square" stroke-linejoin="miter" opacity="1"/></svg>
<svg style="position:absolute;left:1000.2px;top:580.2px" width="27.0" height="14.0" viewBox="0 0 27.0 14.0"><path d="M0.8 0.8L12.8 0.8L12.8 12.8L0.8 12.8L0.8 0.8M4.4 4.4L9.2 4.4L9.2 9.2L4.4 9.2L4.4 4.4M15.0 0.8L24.6 0.8L24.6 5.6L15.0 5.6L15.0 0.8M15.0 3.2L24.6 3.2M13.8 7.4L25.8 7.4M16.2 9.2L23.4 9.2M19.8 5.6L19.8 12.8M13.8 12.8L25.8 12.8" fill="none" stroke="#f6f6f6" stroke-width="1.90" stroke-linecap="square" stroke-linejoin="miter" opacity="1"/></svg>
<svg style="position:absolute;left:1000.2px;top:617.2px" width="24.6" height="14.0" viewBox="0 0 24.6 14.0"><path d="M1.9 0.8L10.5 0.8L10.5 4.4L1.9 4.4M1.9 0.8L1.9 8.0L0.8 12.8M3.5 6.2L11.1 6.2L11.1 12.8L3.5 12.8L3.5 6.2M6.0 6.2L6.0 12.8M8.6 6.2L8.6 12.8M3.5 9.4L11.1 9.4M12.6 3.8L23.4 3.8M18.0 0.8L18.0 6.8M14.2 6.8L21.8 6.8L21.8 12.8L14.2 12.8L14.2 6.8" fill="none" stroke="#f6f6f6" stroke-width="1.90" stroke-linecap="square" stroke-linejoin="miter" opacity="1"/></svg>
<div style="position:absolute;left:956.3px;top:647px;width:33.7px;height:29.3px;background:#0a0a0a;border-radius:2px"></div>
<svg style="position:absolute;left:957.5px;top:648.2px;" width="31" height="27" viewBox="0 0 31 27"><defs><filter id="pb" x="-10%" y="-10%" width="120%" height="120%"><feGaussianBlur stdDeviation="0.9"/></filter><linearGradient id="pbg" x1="0" x2="1"><stop offset="0" stop-color="#4a4d46"/><stop offset=".45" stop-color="#33352f"/><stop offset="1" stop-color="#151514"/></linearGradient><clipPath id="pc"><rect x="0" y="0" width="31" height="26.5"/></clipPath></defs><g clip-path="url(#pc)"><rect width="31" height="26.5" fill="url(#pbg)"/><g filter="url(#pb)"><path d="M9 27C8 16 9 6 14 2.5C18 0.5 23 3 24.5 9C26 15 27 22 28 27Z" fill="#2c140c"/><path d="M12.5 6.5C15 4 19 4.5 20 8C20.8 12 19.5 17 17.5 19.5C15.5 20.5 13.5 18.5 12.5 15C11.8 12 11.6 9 12.5 6.5Z" fill="#c08a66"/><path d="M16.5 6C19 5 20.5 7 20.3 11C20 15 19 18 17.5 19.5C16.5 16 16 10 16.5 6Z" fill="#6a3820"/><path d="M12.5 7C13.5 5.5 15 5.5 15.5 6.5L15 12L13 12.5Z" fill="#dcae8c"/><path d="M13 19L18 19.5L20.5 27H10Z" fill="#b47850"/><path d="M1 27C2 22 5 19.5 9.5 19L12 27Z" fill="#f2ece6"/><path d="M9 27C8.5 20 9.5 12 11 8L12.5 15L12 22L11 27Z" fill="#4a2416"/></g></g></svg>
<svg style="position:absolute;left:1000.2px;top:656.2px" width="13.0" height="13.0" viewBox="0 0 13.0 13.0"><path d="M5.2 0.8L7.4 1.7M0.8 3.0L11.8 3.0M3.0 5.0L9.6 5.0M3.0 6.9L9.6 6.9M3.0 8.7L9.6 8.7L9.6 11.8L3.0 11.8L3.0 8.7" fill="none" stroke="#f0f0f0" stroke-width="1.50" stroke-linecap="square" stroke-linejoin="miter" opacity="1"/></svg>
<svg style="position:absolute;left:1013px;top:656px;" width="12" height="13" viewBox="0 0 12 13"><path d="M6 1V11H10" stroke="#f0f0f0" stroke-width="1.7" fill="none"/></svg>
<svg style="position:absolute;left:1112px;top:656px;" width="14" height="13" viewBox="0 0 14 13"><path d="M2 11V7Q2 2 7 2Q12 2 12 7Q12 11 8 11ZM5 11L11 5" fill="none" stroke="#e8e8e8" stroke-width="1.6"/></svg>
<div style="position:absolute;left:921px;top:680px;width:220px;height:165px;background:#4a4a4a;"></div>
<div style="position:absolute;left:1141px;top:532px;width:11px;height:313px;background:#4a4a4a;"></div>
<div style="position:absolute;left:1141px;top:532px;width:1px;height:313px;background:#424242;"></div>
<div style="position:absolute;left:1141px;top:830px;width:11px;height:15px;background:#545454;"></div>
<div style="position:absolute;left:921px;top:845px;width:231px;height:19px;background:#525252;"></div>
<div style="position:absolute;left:921px;top:845px;width:231px;height:1px;background:#444;"></div>
<div style="position:absolute;left:953px;top:851px;width:10px;height:5px;background:#6e6e6e;"></div>
<svg style="position:absolute;left:975.2px;top:848.2px" width="14.0" height="14.0" viewBox="0 0 14.0 14.0"><path d="M1.4 5.0L1.4 12.8L12.2 12.8L12.2 5.0M6.8 0.8L6.8 12.8" fill="none" stroke="#787878" stroke-width="1.50" stroke-linecap="square" stroke-linejoin="miter" opacity="1"/></svg>
<svg style="position:absolute;left:1001.2px;top:849.7px" width="14.5" height="12.0" viewBox="0 0 14.5 12.0"><path d="M7.0 0.8L7.0 10.8L5.2 9.8M0.8 3.8L5.2 3.8L1.4 9.3M12.7 2.3L8.3 5.3L13.3 10.3" fill="none" stroke="#dedede" stroke-width="2.60" stroke-linecap="square" stroke-linejoin="miter" opacity="1"/></svg>
<svg style="position:absolute;left:1030.2px;top:849.7px" width="14.5" height="12.0" viewBox="0 0 14.5 12.0"><path d="M3.9 0.8L0.8 5.3M2.7 3.8L2.7 10.8M7.0 0.8L5.8 3.8M6.4 2.8L13.3 2.8M8.3 2.8L8.3 10.8M8.3 5.8L12.7 5.8M8.3 8.8L12.7 8.8" fill="none" stroke="#dedede" stroke-width="2.60" stroke-linecap="square" stroke-linejoin="miter" opacity="1"/></svg>
<svg style="position:absolute;left:1060.2px;top:849.7px" width="14.5" height="12.0" viewBox="0 0 14.5 12.0"><path d="M0.8 0.8L13.3 0.8L13.3 10.8L0.8 10.8L0.8 0.8M4.5 3.8L9.6 3.8L9.6 7.8L4.5 7.8L4.5 3.8" fill="none" stroke="#dedede" stroke-width="2.60" stroke-linecap="square" stroke-linejoin="miter" opacity="1"/></svg>
<svg style="position:absolute;left:1088.2px;top:849.7px" width="14.5" height="12.0" viewBox="0 0 14.5 12.0"><path d="M0.8 4.3L13.3 4.3M7.0 0.8L7.0 4.8L0.8 10.8M7.0 4.8L13.3 10.8" fill="none" stroke="#dedede" stroke-width="2.60" stroke-linecap="square" stroke-linejoin="miter" opacity="1"/></svg>
<svg style="position:absolute;left:1119px;top:848px;" width="13" height="15" viewBox="0 0 13 15"><rect x="2" y="1.5" width="9" height="12" fill="#dcdcdc"/><rect x="4.5" y="4" width="4" height="1.5" fill="#525252"/><rect x="6" y="5" width="1.5" height="5" fill="#525252"/></svg>
<div style="position:absolute;left:197px;top:197px;width:550px;height:558px;background:#f0f0f0;box-shadow:0 2px 10px 3px rgba(0,0,0,.55),0 0 0 1px rgba(20,20,20,.6)"></div>
<div style="position:absolute;left:197px;top:197px;width:550px;height:45px;background:#0c86f4;"></div>
<svg style="position:absolute;left:208px;top:211px;" width="19.5" height="18.5" viewBox="0 0 19.5 18.5"><defs><linearGradient id="ti" x1="0" y1="0" x2="0" y2="1"><stop offset="0" stop-color="#e6261a"/><stop offset=".5" stop-color="#ec3a18"/><stop offset=".72" stop-color="#f0a412"/><stop offset=".88" stop-color="#c9c21e"/><stop offset="1" stop-color="#58b030"/></linearGradient></defs><rect x="0.8" y="0.8" width="17.9" height="16.9" rx="2" fill="url(#ti)" stroke="#fff" stroke-width="1.6"/><circle cx="9.6" cy="6.6" r="3.1" fill="#fff"/><rect x="6.6" y="7.5" width="6" height="7.8" fill="#fff"/><circle cx="9.6" cy="5.8" r="1.5" fill="#1a1440"/><rect x="7.4" y="10" width="4.4" height="1.6" fill="#3aa63a"/><rect x="7.4" y="12.6" width="4.4" height="2" fill="#2a8f2a"/><rect x="9.2" y="9" width="0.9" height="6" fill="#fff"/></svg>
<div style="position:absolute;left:237.46px;top:211.76px;font-size:18px;line-height:18px;letter-spacing:0.350px;color:#ffffff;white-space:nowrap;-webkit-text-stroke:0.3px #ffffff">Sartaion</div>
<div style="position:absolute;left:617px;top:219px;width:2.5px;height:2.5px;background:#9fd4ff;border-radius:2px"></div>
<div style="position:absolute;left:660px;top:214px;width:15px;height:12px;background:transparent;border:2px solid #fff"></div>
<svg style="position:absolute;left:711px;top:211px;" width="18" height="18" viewBox="0 0 18 18"><path d="M1.5 1.5L16 16.5M16 1.5L1.5 16.5" stroke="#fff" stroke-width="2.2" fill="none"/></svg>
<div style="position:absolute;left:197px;top:242px;width:550px;height:43px;background:#ffffff;"></div>
<div style="position:absolute;left:197px;top:285px;width:550px;height:1px;background:#c9c9c9;"></div>
<svg style="position:absolute;left:213px;top:255.5px;" width="18" height="17" viewBox="0 0 18 17"><path d="M7 1C10 0.2 13.5 1.2 15.6 3.6C16.8 5 16 6.8 15 8.2L10.2 15.6C9.2 16.8 7.4 16 7.8 14.6L9.6 9.6C8.6 10.6 6.6 11.4 4.6 10.8C1.6 10 0.4 7.2 1.4 4.6C2.2 2.6 4.4 1.6 7 1Z" fill="#1e88f0"/><path d="M10.8 3.6L8.6 7.6L10 7.8L9.4 10.4L11.4 6.6L10.2 6.4Z" fill="#fff"/></svg>
<div style="position:absolute;left:245.46px;top:255.76px;font-size:18px;line-height:18px;letter-spacing:-0.255px;color:#151515;white-space:nowrap;-webkit-text-stroke:0.3px #151515">Sc,ap avvolg dorsth</div>
<svg style="position:absolute;left:710px;top:255px;" width="20" height="18" viewBox="0 0 20 18"><path d="M10 2.5V15.5M1.5 9H18.5" stroke="#4a4a4a" stroke-width="2.6" fill="none"/></svg>
<div style="position:absolute;left:566px;top:286px;width:181px;height:411px;background:#f2f2f2;"></div>
<div style="position:absolute;left:564.5px;top:286px;width:2px;height:411px;background:#d2d2d2;"></div>
<div style="position:absolute;left:216.49px;top:308.11px;font-size:17px;line-height:17px;letter-spacing:0.166px;color:#111;white-space:nowrap;-webkit-text-stroke:0.35px #111">Farth fovr .</div>
<svg style="position:absolute;left:528px;top:311px;" width="18" height="16" viewBox="0 0 18 16"><path d="M8.5 0.8Q9.3 6.2 16 7.6Q9.3 9 8.5 15Q7.7 9 1 7.6Q7.7 6.2 8.5 0.8Z" fill="#7c7c7c"/></svg>
<div style="position:absolute;left:217px;top:338.5px;width:329px;height:1.3px;background:#c6c6c6;"></div>
<div style="position:absolute;left:216.49px;top:354.36px;font-size:17px;line-height:17px;letter-spacing:0.760px;color:#111;white-space:nowrap;-webkit-text-stroke:0.35px #111">Sltepeitt</div>
<div style="position:absolute;left:217px;top:389px;width:324px;height:9px;background:linear-gradient(to right,#000 0%,#000 18%,#3a3a3a 32%,#9a9a9a 62%,#e8e8e8 88%,#fff 100%);border-bottom:1px solid #d0d0d0"></div>
<div style="position:absolute;left:281.5px;top:391.5px;width:11px;height:11px;background:#fff;border-radius:50%;border:1px solid #c8c8c8;box-shadow:0 0 1px rgba(0,0,0,.3)"></div>
<div style="position:absolute;left:535px;top:387.5px;width:12px;height:12px;background:#fff;border-radius:50%;border:1.3px solid #8e8e8e"></div>
<div style="position:absolute;left:217px;top:425.5px;width:329px;height:1.3px;background:#c6c6c6;"></div>
<div style="position:absolute;left:216.49px;top:446.11px;font-size:17px;line-height:17px;letter-spacing:0.372px;color:#111;white-space:nowrap;-webkit-text-stroke:0.35px #111">Cafielder Vit</div>
<svg style="position:absolute;left:528px;top:450px;" width="18" height="11" viewBox="0 0 18 11"><path d="M2 2L9 8.5L16 2" stroke="#8a8a8a" stroke-width="2.5" fill="none"/></svg>
<div style="position:absolute;left:216.5px;top:471.5px;width:135px;height:32px;background:#ffffff;border:1px solid #cdcdcd"></div>
<div style="position:absolute;left:226.25px;top:481.03px;font-size:16.5px;line-height:16.5px;letter-spacing:0.477px;color:#111;white-space:nowrap;-webkit-text-stroke:0.35px #111">Retzlite yuino</div>
<div style="position:absolute;left:356px;top:471.5px;width:36px;height:32px;background:#f6f6f6;border:1px solid #cfcfcf"></div>
<div style="position:absolute;left:364px;top:479px;width:18.5px;height:18.5px;background:#0d6bd0;border-radius:1.5px"></div>
<div style="position:absolute;left:366px;top:481px;font-size:12px;line-height:14px;font-weight:bold;color:#fff;letter-spacing:-1px">PL</div>
<div style="position:absolute;left:397.50px;top:481.03px;font-size:16.5px;line-height:16.5px;letter-spacing:-0.012px;color:#111;white-space:nowrap;-webkit-text-stroke:0.35px #111">On</div>
<div style="position:absolute;left:217px;top:514.5px;width:113px;height:8.5px;background:linear-gradient(to right,#e60000 0%,#ee0a14 18%,#c0106a 45%,#7a14b0 72%,#5a18c8 100%)"></div>
<div style="position:absolute;left:338px;top:514.5px;width:203px;height:8.5px;background:linear-gradient(to right,#18b428 0%,#3cc048 25%,#9adc9e 58%,#e6f4e6 85%,#ffffff 100%);border-bottom:1px solid #d4d4d4"></div>
<div style="position:absolute;left:328px;top:511.5px;width:12.5px;height:12.5px;background:#fff;border-radius:50%;border:1.4px solid #9a9a9a"></div>
<div style="position:absolute;left:535px;top:512px;width:12px;height:12px;background:#fff;border-radius:50%;border:1.3px solid #8e8e8e"></div>
<div style="position:absolute;left:216.49px;top:538.61px;font-size:17px;line-height:17px;letter-spacing:1.553px;color:#111;white-space:nowrap;-webkit-text-stroke:0.35px #111">Ertop tit</div>
<div style="position:absolute;left:216.5px;top:563.5px;width:330px;height:50px;background:#ffffff;border:1px solid #c9c9c9"></div>
<div style="position:absolute;left:229.02px;top:580.76px;font-size:16px;line-height:16px;letter-spacing:0.424px;color:#111;white-space:nowrap;-webkit-text-stroke:0.35px #111">Deawo</div>
<svg style="position:absolute;left:519px;top:580px;" width="16" height="15" viewBox="0 0 16 15"><path d="M1 7.5H15M8 2.5V6.8M8 8.6V12.5" stroke="#444" stroke-width="1.7" fill="none"/></svg>
<div style="position:absolute;left:217px;top:629px;width:19px;height:2px;background:#222;"></div>
<div style="position:absolute;left:239.49px;top:621.61px;font-size:17px;line-height:17px;letter-spacing:0.956px;color:#111;white-space:nowrap;-webkit-text-stroke:0.35px #111">WierWeat</div>
<div style="position:absolute;left:255.5px;top:661.5px;width:18.5px;height:2px;background:#222;"></div>
<div style="position:absolute;left:281px;top:649px;width:51px;height:27.5px;background:#ffffff;border:1px solid #cdcdcd"></div>
<div style="position:absolute;left:287.00px;top:654.78px;font-size:16.5px;line-height:16.5px;letter-spacing:-1.697px;color:#111;white-space:nowrap;-webkit-text-stroke:0.35px #111">Rzse</div>
<div style="position:absolute;left:584.5px;top:309.5px;width:143px;height:33.5px;background:#efefef;border:2px solid #1a7fe0;border-radius:2px"></div>
<div style="position:absolute;left:638.49px;top:318.11px;font-size:17px;line-height:17px;letter-spacing:-0.651px;color:#111;white-space:nowrap;-webkit-text-stroke:0.35px #111">Detc</div>
<div style="position:absolute;left:584.5px;top:355px;width:143px;height:33.5px;background:#cfe0f7;border:2px solid #2b84e2;border-radius:2px"></div>
<div style="position:absolute;left:593.50px;top:364.03px;font-size:16.5px;line-height:16.5px;letter-spacing:0.109px;color:#111;white-space:nowrap;-webkit-text-stroke:0.35px #111">Rosterdon</div>
<div style="position:absolute;left:584.5px;top:400.5px;width:143px;height:33.5px;background:#ebebeb;border:1.3px solid #c6c6c6;border-radius:2px"></div>
<div style="position:absolute;left:593.24px;top:409.61px;font-size:17px;line-height:17px;letter-spacing:-0.351px;color:#111;white-space:nowrap;-webkit-text-stroke:0.35px #111">Herker</div>
<div style="position:absolute;left:197px;top:696.5px;width:550px;height:1.3px;background:#cfcfcf;"></div>
<div style="position:absolute;left:216px;top:713px;width:26px;height:25.5px;background:#ececec;border:1.3px solid #c2c2c2;border-radius:4px"></div>
<svg style="position:absolute;left:220px;top:715.5px;" width="18" height="18" viewBox="0 0 18 18"><path d="M9 0.8C13.5 0.8 17.2 2.6 17.2 6.6C17.2 11.6 12.6 16 9 17C5.4 16 0.8 11.6 0.8 6.6C0.8 2.6 4.5 0.8 9 0.8Z" fill="#929292"/><path d="M3.4 6.4H14.6C14.6 8.8 12.8 10.4 10.4 10.4H7.6C5.2 10.4 3.4 8.8 3.4 6.4Z" fill="#eeeeee"/><rect x="8.3" y="5.2" width="1.5" height="6.2" fill="#929292"/></svg>
<div style="position:absolute;left:253.5px;top:712.5px;width:60.5px;height:27px;background:#ffffff;border:1px solid #cccccc"></div>
<div style="position:absolute;left:261.99px;top:718.11px;font-size:17px;line-height:17px;letter-spacing:-0.977px;color:#111;white-space:nowrap;-webkit-text-stroke:0.35px #111">Reats</div>
<div style="position:absolute;left:321.5px;top:712px;width:32.5px;height:27.5px;background:#e4effc;border:1.3px solid #4f97e6;border-radius:2px"></div>
<div style="position:absolute;left:328px;top:717.5px;width:19.5px;height:18.5px;background:#0c62be;"></div>
<div style="position:absolute;left:330px;top:720px;font-size:11px;line-height:13px;font-weight:bold;color:#9ecbff;letter-spacing:-.5px">Pi:</div>
<div style="position:absolute;left:360px;top:712.5px;width:34px;height:27px;background:#ffffff;border:1px solid #d2c8c0"></div>
<div style="position:absolute;left:400.5px;top:712px;width:32px;height:27.5px;background:#ececec;border:1px solid #c8c8c8"></div>
<div style="position:absolute;left:407px;top:716px;width:19.5px;height:19px;background:#0b58a8;"></div>
<div style="position:absolute;left:410px;top:719px;font-size:11px;line-height:13px;font-weight:bold;color:#7fb6f0;letter-spacing:-.5px">B:</div>
<svg style="position:absolute;left:711px;top:718px;" width="16" height="16" viewBox="0 0 16 16"><path d="M2 2L13.5 13.5M13.5 2L2 13.5" stroke="#808080" stroke-width="1.9" fill="none"/></svg>
</body></html>
